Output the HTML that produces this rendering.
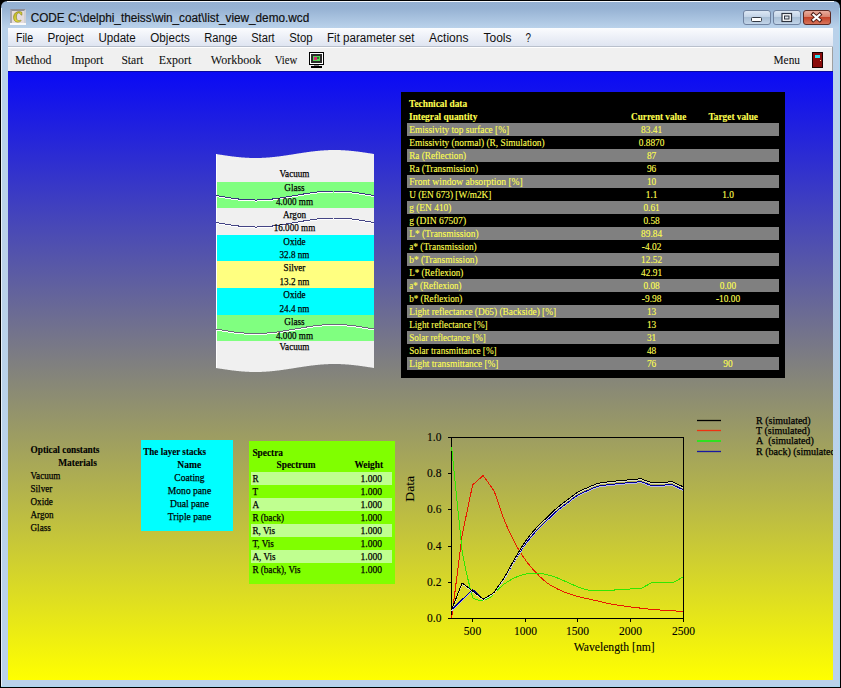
<!DOCTYPE html>
<html><head><meta charset="utf-8"><style>html,body{margin:0;padding:0;background:#000;overflow:hidden}svg{display:block}</style></head>
<body><svg width="841" height="688" viewBox="0 0 841 688" shape-rendering="auto">
<defs>
<linearGradient id="tb" gradientUnits="userSpaceOnUse" x1="0" y1="0" x2="0" y2="688"><stop offset="0" stop-color="#94b0d2"/><stop offset="0.012" stop-color="#96b2d3"/><stop offset="0.04" stop-color="#b9d1ea"/><stop offset="1" stop-color="#bad2ea"/></linearGradient>
<linearGradient id="mb" x1="0" y1="0" x2="0" y2="1"><stop offset="0" stop-color="#fbfcfe"/><stop offset="0.45" stop-color="#eef1f8"/><stop offset="1" stop-color="#dfe5f1"/></linearGradient>
<linearGradient id="cl" gradientUnits="userSpaceOnUse" x1="0" y1="47" x2="0" y2="680"><stop offset="0" stop-color="#0000ff"/><stop offset="1" stop-color="#ffff00"/></linearGradient>
<linearGradient id="btn" x1="0" y1="0" x2="0" y2="1"><stop offset="0" stop-color="#dfe9f5"/><stop offset="0.45" stop-color="#c3d4e7"/><stop offset="0.5" stop-color="#a9bfd6"/><stop offset="1" stop-color="#c4d6ea"/></linearGradient>
<linearGradient id="cbtn" x1="0" y1="0" x2="0" y2="1"><stop offset="0" stop-color="#eab0a2"/><stop offset="0.45" stop-color="#d9826c"/><stop offset="0.5" stop-color="#c4442a"/><stop offset="1" stop-color="#d8775d"/></linearGradient>
</defs>
<rect x="0" y="0" width="841" height="688" fill="#000" />
<path d="M1,8 Q1,1 8,1 L833,1 Q840,1 840,8 L840,687 L1,687 Z" fill="url(#tb)"/>
<rect x="1" y="8" width="1" height="679" fill="#e8f0f8" />
<rect x="7" y="1" width="827" height="1" fill="#f4f8fc" />
<rect x="1" y="686" width="839" height="1" fill="#a8d8f0" />
<rect x="839" y="8" width="1" height="679" fill="#a8d8f0" />
<rect x="8" y="28" width="825" height="18" fill="url(#mb)" />
<rect x="8" y="46" width="825" height="1" fill="#b9c0cc" />
<rect x="8" y="47" width="825" height="24" fill="#f0f0f0" />
<rect x="8" y="47" width="825" height="1" fill="#ffffff" />
<rect x="832" y="47" width="1" height="24" fill="#a0a0a0" />
<rect x="8" y="71" width="825" height="609" fill="url(#cl)" />
<rect x="8" y="71" width="825" height="1" fill="#0a0aa0" />
<text x="30.70" y="22.00" font-family="Liberation Sans" font-size="12" font-weight="400" fill="#101010" textLength="278.50" lengthAdjust="spacingAndGlyphs" stroke="#101010" stroke-width="0.2" >CODE C:\delphi_theiss\win_coat\list_view_demo.wcd</text>
<g>
<rect x="10" y="9" width="16" height="16" fill="#a8a8b0"/>
<path d="M10,9 L26,9 L23,12 L13,12 Z" fill="#8e8e98"/>
<path d="M10,25 L26,25 L23,22 L13,22 Z" fill="#fafafa"/>
<path d="M26,9 L26,25 L23,22 L23,12 Z" fill="#d0d0d6"/>
<rect x="12" y="11" width="12" height="12" fill="#e6dcdc"/>
<rect x="10" y="23" width="16" height="2" fill="#fafafa"/>
<defs><linearGradient id="cg" x1="0" y1="0" x2="1" y2="1"><stop offset="0" stop-color="#b8b020"/><stop offset="0.6" stop-color="#e0d838"/><stop offset="1" stop-color="#f4f070"/></linearGradient></defs>
<path d="M21.9,12.3 C20.4,11.3 17.4,11.3 15.4,12.9 C13.0,14.9 12.9,19.6 15.4,21.4 C17.2,22.6 19.6,22.3 21.2,20.7 L20.7,20.1 C19.3,21.0 17.7,20.8 17.0,19.6 C15.9,17.6 16.3,14.2 17.9,13.1 C18.8,12.6 20.0,13.0 20.7,14.6 L21.9,15.2 Z" fill="url(#cg)" stroke="#6e6810" stroke-width="0.5"/>
</g>
<rect x="743.5" y="10.5" width="27" height="14" rx="2.5" fill="url(#btn)" stroke="#6f82a0" stroke-width="1"/>
<rect x="773.5" y="10.5" width="27" height="14" rx="2.5" fill="url(#btn)" stroke="#6f82a0" stroke-width="1"/>
<rect x="803.5" y="10.5" width="27" height="14" rx="2.5" fill="url(#cbtn)" stroke="#5c2a24" stroke-width="1"/>
<rect x="751.5" y="17.5" width="10" height="4" rx="1" fill="#fff" stroke="#343a44" stroke-width="1"/>
<rect x="782" y="13.5" width="9.5" height="8" fill="#fff" stroke="#2e3440" stroke-width="1.2"/><rect x="784.5" y="16" width="4.5" height="3" fill="#dfe6ee" stroke="#2e3440" stroke-width="1"/>
<path d="M811.8,13.2 L821.2,21.4 M821.2,13.2 L811.8,21.4" stroke="#4a1a14" stroke-width="3.8" stroke-linecap="butt"/><path d="M812.6,14 L820.4,20.6 M820.4,14 L812.6,20.6" stroke="#ffffff" stroke-width="2.1" stroke-linecap="butt"/>
<text x="16.00" y="42.00" font-family="Liberation Sans" font-size="12" font-weight="400" fill="#101010" textLength="17.00" lengthAdjust="spacingAndGlyphs"  >File</text>
<text x="47.40" y="42.00" font-family="Liberation Sans" font-size="12" font-weight="400" fill="#101010" textLength="36.50" lengthAdjust="spacingAndGlyphs"  >Project</text>
<text x="98.40" y="42.00" font-family="Liberation Sans" font-size="12" font-weight="400" fill="#101010" textLength="37.40" lengthAdjust="spacingAndGlyphs"  >Update</text>
<text x="150.30" y="42.00" font-family="Liberation Sans" font-size="12" font-weight="400" fill="#101010" textLength="39.50" lengthAdjust="spacingAndGlyphs"  >Objects</text>
<text x="204.30" y="42.00" font-family="Liberation Sans" font-size="12" font-weight="400" fill="#101010" textLength="32.90" lengthAdjust="spacingAndGlyphs"  >Range</text>
<text x="251.20" y="42.00" font-family="Liberation Sans" font-size="12" font-weight="400" fill="#101010" textLength="23.50" lengthAdjust="spacingAndGlyphs"  >Start</text>
<text x="289.20" y="42.00" font-family="Liberation Sans" font-size="12" font-weight="400" fill="#101010" textLength="23.40" lengthAdjust="spacingAndGlyphs"  >Stop</text>
<text x="327.00" y="42.00" font-family="Liberation Sans" font-size="12" font-weight="400" fill="#101010" textLength="87.50" lengthAdjust="spacingAndGlyphs"  >Fit parameter set</text>
<text x="429.00" y="42.00" font-family="Liberation Sans" font-size="12" font-weight="400" fill="#101010" textLength="39.50" lengthAdjust="spacingAndGlyphs"  >Actions</text>
<text x="483.50" y="42.00" font-family="Liberation Sans" font-size="12" font-weight="400" fill="#101010" textLength="28.00" lengthAdjust="spacingAndGlyphs"  >Tools</text>
<text x="525.50" y="42.00" font-family="Liberation Sans" font-size="12" font-weight="400" fill="#101010" textLength="5.50" lengthAdjust="spacingAndGlyphs"  >?</text>
<text x="15.00" y="64.00" font-family="Liberation Serif" font-size="12" font-weight="400" fill="#101010" textLength="36.40" lengthAdjust="spacingAndGlyphs" stroke="#101010" stroke-width="0.08" >Method</text>
<text x="71.00" y="64.00" font-family="Liberation Serif" font-size="12" font-weight="400" fill="#101010" textLength="32.40" lengthAdjust="spacingAndGlyphs" stroke="#101010" stroke-width="0.08" >Import</text>
<text x="121.40" y="64.00" font-family="Liberation Serif" font-size="12" font-weight="400" fill="#101010" textLength="21.90" lengthAdjust="spacingAndGlyphs" stroke="#101010" stroke-width="0.08" >Start</text>
<text x="158.80" y="64.00" font-family="Liberation Serif" font-size="12" font-weight="400" fill="#101010" textLength="32.50" lengthAdjust="spacingAndGlyphs" stroke="#101010" stroke-width="0.08" >Export</text>
<text x="210.80" y="64.00" font-family="Liberation Serif" font-size="12" font-weight="400" fill="#101010" textLength="50.40" lengthAdjust="spacingAndGlyphs" stroke="#101010" stroke-width="0.08" >Workbook</text>
<text x="274.70" y="64.00" font-family="Liberation Serif" font-size="12" font-weight="400" fill="#101010" textLength="22.50" lengthAdjust="spacingAndGlyphs" stroke="#101010" stroke-width="0.08" >View</text>
<text x="773.50" y="64.00" font-family="Liberation Serif" font-size="12" font-weight="400" fill="#101010" textLength="26.50" lengthAdjust="spacingAndGlyphs" stroke="#101010" stroke-width="0.08" >Menu</text>
<g>
<rect x="309" y="52" width="15" height="13" fill="#000"/>
<rect x="310" y="53" width="13" height="11" fill="#fff"/>
<rect x="311" y="54" width="11" height="9" fill="#2a2a2a"/>
<rect x="313" y="56" width="7" height="5" fill="#58d058"/>
<rect x="314" y="57" width="3" height="3" fill="#d82878"/>
<rect x="317" y="57" width="2" height="2" fill="#208020"/>
<rect x="314" y="65" width="5" height="1" fill="#808080"/>
<rect x="311" y="66" width="11" height="2" fill="#000"/>
</g>
<g>
<rect x="812" y="52" width="11" height="16" fill="#1a0000"/>
<rect x="813" y="53" width="9" height="14" fill="#8a0a0a"/>
<rect x="815" y="55" width="5" height="3" fill="#30e0f0"/>
<rect x="820" y="60" width="1" height="1" fill="#ffd0a0"/>
</g>
<clipPath id="stk"><path d="M216.0,154.00 216.5,154.08 217.0,154.16 217.5,154.24 218.0,154.32 218.5,154.40 219.0,154.48 219.5,154.55 220.0,154.63 220.5,154.71 221.0,154.79 221.5,154.87 222.0,154.95 222.5,155.02 223.0,155.10 223.5,155.18 224.0,155.25 224.5,155.33 225.0,155.40 225.5,155.48 226.0,155.55 226.5,155.62 227.0,155.69 227.5,155.77 228.0,155.84 228.5,155.91 229.0,155.98 229.5,156.05 230.0,156.11 230.5,156.18 231.0,156.25 231.5,156.31 232.0,156.38 232.5,156.44 233.0,156.50 233.5,156.56 234.0,156.62 234.5,156.68 235.0,156.74 235.5,156.80 236.0,156.86 236.5,156.91 237.0,156.97 237.5,157.02 238.0,157.07 238.5,157.12 239.0,157.17 239.5,157.22 240.0,157.26 240.5,157.31 241.0,157.35 241.5,157.40 242.0,157.44 242.5,157.48 243.0,157.52 243.5,157.55 244.0,157.59 244.5,157.62 245.0,157.66 245.5,157.69 246.0,157.72 246.5,157.75 247.0,157.77 247.5,157.80 248.0,157.82 248.5,157.85 249.0,157.87 249.5,157.89 250.0,157.90 250.5,157.92 251.0,157.94 251.5,157.95 252.0,157.96 252.5,157.97 253.0,157.98 253.5,157.99 254.0,157.99 254.5,158.00 255.0,158.00 255.5,158.00 256.0,158.00 256.5,158.00 257.0,157.99 257.5,157.99 258.0,157.98 258.5,157.97 259.0,157.96 259.5,157.95 260.0,157.94 260.5,157.92 261.0,157.90 261.5,157.89 262.0,157.87 262.5,157.85 263.0,157.82 263.5,157.80 264.0,157.77 264.5,157.75 265.0,157.72 265.5,157.69 266.0,157.66 266.5,157.62 267.0,157.59 267.5,157.55 268.0,157.52 268.5,157.48 269.0,157.44 269.5,157.40 270.0,157.35 270.5,157.31 271.0,157.26 271.5,157.22 272.0,157.17 272.5,157.12 273.0,157.07 273.5,157.02 274.0,156.97 274.5,156.91 275.0,156.86 275.5,156.80 276.0,156.74 276.5,156.68 277.0,156.62 277.5,156.56 278.0,156.50 278.5,156.44 279.0,156.38 279.5,156.31 280.0,156.25 280.5,156.18 281.0,156.11 281.5,156.05 282.0,155.98 282.5,155.91 283.0,155.84 283.5,155.77 284.0,155.69 284.5,155.62 285.0,155.55 285.5,155.48 286.0,155.40 286.5,155.33 287.0,155.25 287.5,155.18 288.0,155.10 288.5,155.02 289.0,154.95 289.5,154.87 290.0,154.79 290.5,154.71 291.0,154.63 291.5,154.55 292.0,154.48 292.5,154.40 293.0,154.32 293.5,154.24 294.0,154.16 294.5,154.08 295.0,154.00 295.5,153.92 296.0,153.84 296.5,153.76 297.0,153.68 297.5,153.60 298.0,153.52 298.5,153.45 299.0,153.37 299.5,153.29 300.0,153.21 300.5,153.13 301.0,153.05 301.5,152.98 302.0,152.90 302.5,152.82 303.0,152.75 303.5,152.67 304.0,152.60 304.5,152.52 305.0,152.45 305.5,152.38 306.0,152.31 306.5,152.23 307.0,152.16 307.5,152.09 308.0,152.02 308.5,151.95 309.0,151.89 309.5,151.82 310.0,151.75 310.5,151.69 311.0,151.62 311.5,151.56 312.0,151.50 312.5,151.44 313.0,151.38 313.5,151.32 314.0,151.26 314.5,151.20 315.0,151.14 315.5,151.09 316.0,151.03 316.5,150.98 317.0,150.93 317.5,150.88 318.0,150.83 318.5,150.78 319.0,150.74 319.5,150.69 320.0,150.65 320.5,150.60 321.0,150.56 321.5,150.52 322.0,150.48 322.5,150.45 323.0,150.41 323.5,150.38 324.0,150.34 324.5,150.31 325.0,150.28 325.5,150.25 326.0,150.23 326.5,150.20 327.0,150.18 327.5,150.15 328.0,150.13 328.5,150.11 329.0,150.10 329.5,150.08 330.0,150.06 330.5,150.05 331.0,150.04 331.5,150.03 332.0,150.02 332.5,150.01 333.0,150.01 333.5,150.00 334.0,150.00 334.5,150.00 335.0,150.00 335.5,150.00 336.0,150.01 336.5,150.01 337.0,150.02 337.5,150.03 338.0,150.04 338.5,150.05 339.0,150.06 339.5,150.08 340.0,150.10 340.5,150.11 341.0,150.13 341.5,150.15 342.0,150.18 342.5,150.20 343.0,150.23 343.5,150.25 344.0,150.28 344.5,150.31 345.0,150.34 345.5,150.38 346.0,150.41 346.5,150.45 347.0,150.48 347.5,150.52 348.0,150.56 348.5,150.60 349.0,150.65 349.5,150.69 350.0,150.74 350.5,150.78 351.0,150.83 351.5,150.88 352.0,150.93 352.5,150.98 353.0,151.03 353.5,151.09 354.0,151.14 354.5,151.20 355.0,151.26 355.5,151.32 356.0,151.38 356.5,151.44 357.0,151.50 357.5,151.56 358.0,151.62 358.5,151.69 359.0,151.75 359.5,151.82 360.0,151.89 360.5,151.95 361.0,152.02 361.5,152.09 362.0,152.16 362.5,152.23 363.0,152.31 363.5,152.38 364.0,152.45 364.5,152.52 365.0,152.60 365.5,152.67 366.0,152.75 366.5,152.82 367.0,152.90 367.5,152.98 368.0,153.05 368.5,153.13 369.0,153.21 369.5,153.29 370.0,153.37 370.5,153.45 371.0,153.52 371.5,153.60 372.0,153.68 372.5,153.76 373.0,153.84 373.5,153.92 374.0,154.00 L374.0,368.00 373.5,367.92 373.0,367.84 372.5,367.76 372.0,367.68 371.5,367.60 371.0,367.52 370.5,367.45 370.0,367.37 369.5,367.29 369.0,367.21 368.5,367.13 368.0,367.05 367.5,366.98 367.0,366.90 366.5,366.82 366.0,366.75 365.5,366.67 365.0,366.60 364.5,366.52 364.0,366.45 363.5,366.38 363.0,366.31 362.5,366.23 362.0,366.16 361.5,366.09 361.0,366.02 360.5,365.95 360.0,365.89 359.5,365.82 359.0,365.75 358.5,365.69 358.0,365.62 357.5,365.56 357.0,365.50 356.5,365.44 356.0,365.38 355.5,365.32 355.0,365.26 354.5,365.20 354.0,365.14 353.5,365.09 353.0,365.03 352.5,364.98 352.0,364.93 351.5,364.88 351.0,364.83 350.5,364.78 350.0,364.74 349.5,364.69 349.0,364.65 348.5,364.60 348.0,364.56 347.5,364.52 347.0,364.48 346.5,364.45 346.0,364.41 345.5,364.38 345.0,364.34 344.5,364.31 344.0,364.28 343.5,364.25 343.0,364.23 342.5,364.20 342.0,364.18 341.5,364.15 341.0,364.13 340.5,364.11 340.0,364.10 339.5,364.08 339.0,364.06 338.5,364.05 338.0,364.04 337.5,364.03 337.0,364.02 336.5,364.01 336.0,364.01 335.5,364.00 335.0,364.00 334.5,364.00 334.0,364.00 333.5,364.00 333.0,364.01 332.5,364.01 332.0,364.02 331.5,364.03 331.0,364.04 330.5,364.05 330.0,364.06 329.5,364.08 329.0,364.10 328.5,364.11 328.0,364.13 327.5,364.15 327.0,364.18 326.5,364.20 326.0,364.23 325.5,364.25 325.0,364.28 324.5,364.31 324.0,364.34 323.5,364.38 323.0,364.41 322.5,364.45 322.0,364.48 321.5,364.52 321.0,364.56 320.5,364.60 320.0,364.65 319.5,364.69 319.0,364.74 318.5,364.78 318.0,364.83 317.5,364.88 317.0,364.93 316.5,364.98 316.0,365.03 315.5,365.09 315.0,365.14 314.5,365.20 314.0,365.26 313.5,365.32 313.0,365.38 312.5,365.44 312.0,365.50 311.5,365.56 311.0,365.62 310.5,365.69 310.0,365.75 309.5,365.82 309.0,365.89 308.5,365.95 308.0,366.02 307.5,366.09 307.0,366.16 306.5,366.23 306.0,366.31 305.5,366.38 305.0,366.45 304.5,366.52 304.0,366.60 303.5,366.67 303.0,366.75 302.5,366.82 302.0,366.90 301.5,366.98 301.0,367.05 300.5,367.13 300.0,367.21 299.5,367.29 299.0,367.37 298.5,367.45 298.0,367.52 297.5,367.60 297.0,367.68 296.5,367.76 296.0,367.84 295.5,367.92 295.0,368.00 294.5,368.08 294.0,368.16 293.5,368.24 293.0,368.32 292.5,368.40 292.0,368.48 291.5,368.55 291.0,368.63 290.5,368.71 290.0,368.79 289.5,368.87 289.0,368.95 288.5,369.02 288.0,369.10 287.5,369.18 287.0,369.25 286.5,369.33 286.0,369.40 285.5,369.48 285.0,369.55 284.5,369.62 284.0,369.69 283.5,369.77 283.0,369.84 282.5,369.91 282.0,369.98 281.5,370.05 281.0,370.11 280.5,370.18 280.0,370.25 279.5,370.31 279.0,370.38 278.5,370.44 278.0,370.50 277.5,370.56 277.0,370.62 276.5,370.68 276.0,370.74 275.5,370.80 275.0,370.86 274.5,370.91 274.0,370.97 273.5,371.02 273.0,371.07 272.5,371.12 272.0,371.17 271.5,371.22 271.0,371.26 270.5,371.31 270.0,371.35 269.5,371.40 269.0,371.44 268.5,371.48 268.0,371.52 267.5,371.55 267.0,371.59 266.5,371.62 266.0,371.66 265.5,371.69 265.0,371.72 264.5,371.75 264.0,371.77 263.5,371.80 263.0,371.82 262.5,371.85 262.0,371.87 261.5,371.89 261.0,371.90 260.5,371.92 260.0,371.94 259.5,371.95 259.0,371.96 258.5,371.97 258.0,371.98 257.5,371.99 257.0,371.99 256.5,372.00 256.0,372.00 255.5,372.00 255.0,372.00 254.5,372.00 254.0,371.99 253.5,371.99 253.0,371.98 252.5,371.97 252.0,371.96 251.5,371.95 251.0,371.94 250.5,371.92 250.0,371.90 249.5,371.89 249.0,371.87 248.5,371.85 248.0,371.82 247.5,371.80 247.0,371.77 246.5,371.75 246.0,371.72 245.5,371.69 245.0,371.66 244.5,371.62 244.0,371.59 243.5,371.55 243.0,371.52 242.5,371.48 242.0,371.44 241.5,371.40 241.0,371.35 240.5,371.31 240.0,371.26 239.5,371.22 239.0,371.17 238.5,371.12 238.0,371.07 237.5,371.02 237.0,370.97 236.5,370.91 236.0,370.86 235.5,370.80 235.0,370.74 234.5,370.68 234.0,370.62 233.5,370.56 233.0,370.50 232.5,370.44 232.0,370.38 231.5,370.31 231.0,370.25 230.5,370.18 230.0,370.11 229.5,370.05 229.0,369.98 228.5,369.91 228.0,369.84 227.5,369.77 227.0,369.69 226.5,369.62 226.0,369.55 225.5,369.48 225.0,369.40 224.5,369.33 224.0,369.25 223.5,369.18 223.0,369.10 222.5,369.02 222.0,368.95 221.5,368.87 221.0,368.79 220.5,368.71 220.0,368.63 219.5,368.55 219.0,368.48 218.5,368.40 218.0,368.32 217.5,368.24 217.0,368.16 216.5,368.08 216.0,368.00 Z"/></clipPath>
<g clip-path="url(#stk)">
<rect x="216" y="140" width="158" height="42" fill="#f0f0f0" />
<rect x="216" y="182" width="158" height="26" fill="#80ff80" />
<rect x="216" y="208" width="158" height="27" fill="#f0f0f0" />
<rect x="216" y="235" width="158" height="26" fill="#00ffff" />
<rect x="216" y="261" width="158" height="27" fill="#ffff80" />
<rect x="216" y="288" width="158" height="27" fill="#00ffff" />
<rect x="216" y="315" width="158" height="26" fill="#80ff80" />
<rect x="216" y="341" width="158" height="39" fill="#f0f0f0" />
<rect x="216" y="140" width="1" height="240" fill="#ffffff" />
<polyline points="216.0,196.50 216.5,196.59 217.0,196.68 217.5,196.77 218.0,196.86 218.5,196.95 219.0,197.04 219.5,197.12 220.0,197.21 220.5,197.30 221.0,197.39 221.5,197.48 222.0,197.56 222.5,197.65 223.0,197.74 223.5,197.82 224.0,197.91 224.5,197.99 225.0,198.08 225.5,198.16 226.0,198.24 226.5,198.32 227.0,198.41 227.5,198.49 228.0,198.57 228.5,198.65 229.0,198.72 229.5,198.80 230.0,198.88 230.5,198.95 231.0,199.03 231.5,199.10 232.0,199.17 232.5,199.25 233.0,199.32 233.5,199.38 234.0,199.45 234.5,199.52 235.0,199.59 235.5,199.65 236.0,199.71 236.5,199.78 237.0,199.84 237.5,199.90 238.0,199.95 238.5,200.01 239.0,200.07 239.5,200.12 240.0,200.17 240.5,200.22 241.0,200.27 241.5,200.32 242.0,200.37 242.5,200.41 243.0,200.46 243.5,200.50 244.0,200.54 244.5,200.58 245.0,200.61 245.5,200.65 246.0,200.68 246.5,200.71 247.0,200.75 247.5,200.77 248.0,200.80 248.5,200.83 249.0,200.85 249.5,200.87 250.0,200.89 250.5,200.91 251.0,200.93 251.5,200.94 252.0,200.96 252.5,200.97 253.0,200.98 253.5,200.99 254.0,200.99 254.5,201.00 255.0,201.00 255.5,201.00 256.0,201.00 256.5,201.00 257.0,200.99 257.5,200.99 258.0,200.98 258.5,200.97 259.0,200.96 259.5,200.94 260.0,200.93 260.5,200.91 261.0,200.89 261.5,200.87 262.0,200.85 262.5,200.83 263.0,200.80 263.5,200.77 264.0,200.75 264.5,200.71 265.0,200.68 265.5,200.65 266.0,200.61 266.5,200.58 267.0,200.54 267.5,200.50 268.0,200.46 268.5,200.41 269.0,200.37 269.5,200.32 270.0,200.27 270.5,200.22 271.0,200.17 271.5,200.12 272.0,200.07 272.5,200.01 273.0,199.95 273.5,199.90 274.0,199.84 274.5,199.78 275.0,199.71 275.5,199.65 276.0,199.59 276.5,199.52 277.0,199.45 277.5,199.38 278.0,199.32 278.5,199.25 279.0,199.17 279.5,199.10 280.0,199.03 280.5,198.95 281.0,198.88 281.5,198.80 282.0,198.72 282.5,198.65 283.0,198.57 283.5,198.49 284.0,198.41 284.5,198.32 285.0,198.24 285.5,198.16 286.0,198.08 286.5,197.99 287.0,197.91 287.5,197.82 288.0,197.74 288.5,197.65 289.0,197.56 289.5,197.48 290.0,197.39 290.5,197.30 291.0,197.21 291.5,197.12 292.0,197.04 292.5,196.95 293.0,196.86 293.5,196.77 294.0,196.68 294.5,196.59 295.0,196.50 295.5,196.41 296.0,196.32 296.5,196.23 297.0,196.14 297.5,196.05 298.0,195.96 298.5,195.88 299.0,195.79 299.5,195.70 300.0,195.61 300.5,195.52 301.0,195.44 301.5,195.35 302.0,195.26 302.5,195.18 303.0,195.09 303.5,195.01 304.0,194.92 304.5,194.84 305.0,194.76 305.5,194.68 306.0,194.59 306.5,194.51 307.0,194.43 307.5,194.35 308.0,194.28 308.5,194.20 309.0,194.12 309.5,194.05 310.0,193.97 310.5,193.90 311.0,193.83 311.5,193.75 312.0,193.68 312.5,193.62 313.0,193.55 313.5,193.48 314.0,193.41 314.5,193.35 315.0,193.29 315.5,193.22 316.0,193.16 316.5,193.10 317.0,193.05 317.5,192.99 318.0,192.93 318.5,192.88 319.0,192.83 319.5,192.78 320.0,192.73 320.5,192.68 321.0,192.63 321.5,192.59 322.0,192.54 322.5,192.50 323.0,192.46 323.5,192.42 324.0,192.39 324.5,192.35 325.0,192.32 325.5,192.29 326.0,192.25 326.5,192.23 327.0,192.20 327.5,192.17 328.0,192.15 328.5,192.13 329.0,192.11 329.5,192.09 330.0,192.07 330.5,192.06 331.0,192.04 331.5,192.03 332.0,192.02 332.5,192.01 333.0,192.01 333.5,192.00 334.0,192.00 334.5,192.00 335.0,192.00 335.5,192.00 336.0,192.01 336.5,192.01 337.0,192.02 337.5,192.03 338.0,192.04 338.5,192.06 339.0,192.07 339.5,192.09 340.0,192.11 340.5,192.13 341.0,192.15 341.5,192.17 342.0,192.20 342.5,192.23 343.0,192.25 343.5,192.29 344.0,192.32 344.5,192.35 345.0,192.39 345.5,192.42 346.0,192.46 346.5,192.50 347.0,192.54 347.5,192.59 348.0,192.63 348.5,192.68 349.0,192.73 349.5,192.78 350.0,192.83 350.5,192.88 351.0,192.93 351.5,192.99 352.0,193.05 352.5,193.10 353.0,193.16 353.5,193.22 354.0,193.29 354.5,193.35 355.0,193.41 355.5,193.48 356.0,193.55 356.5,193.62 357.0,193.68 357.5,193.75 358.0,193.83 358.5,193.90 359.0,193.97 359.5,194.05 360.0,194.12 360.5,194.20 361.0,194.28 361.5,194.35 362.0,194.43 362.5,194.51 363.0,194.59 363.5,194.68 364.0,194.76 364.5,194.84 365.0,194.92 365.5,195.01 366.0,195.09 366.5,195.18 367.0,195.26 367.5,195.35 368.0,195.44 368.5,195.52 369.0,195.61 369.5,195.70 370.0,195.79 370.5,195.88 371.0,195.96 371.5,196.05 372.0,196.14 372.5,196.23 373.0,196.32 373.5,196.41 374.0,196.50" fill="none" stroke="#ffffff" stroke-width="1" shape-rendering="crispEdges"/>
<polyline points="216.0,195.50 216.5,195.59 217.0,195.68 217.5,195.77 218.0,195.86 218.5,195.95 219.0,196.04 219.5,196.12 220.0,196.21 220.5,196.30 221.0,196.39 221.5,196.48 222.0,196.56 222.5,196.65 223.0,196.74 223.5,196.82 224.0,196.91 224.5,196.99 225.0,197.08 225.5,197.16 226.0,197.24 226.5,197.32 227.0,197.41 227.5,197.49 228.0,197.57 228.5,197.65 229.0,197.72 229.5,197.80 230.0,197.88 230.5,197.95 231.0,198.03 231.5,198.10 232.0,198.17 232.5,198.25 233.0,198.32 233.5,198.38 234.0,198.45 234.5,198.52 235.0,198.59 235.5,198.65 236.0,198.71 236.5,198.78 237.0,198.84 237.5,198.90 238.0,198.95 238.5,199.01 239.0,199.07 239.5,199.12 240.0,199.17 240.5,199.22 241.0,199.27 241.5,199.32 242.0,199.37 242.5,199.41 243.0,199.46 243.5,199.50 244.0,199.54 244.5,199.58 245.0,199.61 245.5,199.65 246.0,199.68 246.5,199.71 247.0,199.75 247.5,199.77 248.0,199.80 248.5,199.83 249.0,199.85 249.5,199.87 250.0,199.89 250.5,199.91 251.0,199.93 251.5,199.94 252.0,199.96 252.5,199.97 253.0,199.98 253.5,199.99 254.0,199.99 254.5,200.00 255.0,200.00 255.5,200.00 256.0,200.00 256.5,200.00 257.0,199.99 257.5,199.99 258.0,199.98 258.5,199.97 259.0,199.96 259.5,199.94 260.0,199.93 260.5,199.91 261.0,199.89 261.5,199.87 262.0,199.85 262.5,199.83 263.0,199.80 263.5,199.77 264.0,199.75 264.5,199.71 265.0,199.68 265.5,199.65 266.0,199.61 266.5,199.58 267.0,199.54 267.5,199.50 268.0,199.46 268.5,199.41 269.0,199.37 269.5,199.32 270.0,199.27 270.5,199.22 271.0,199.17 271.5,199.12 272.0,199.07 272.5,199.01 273.0,198.95 273.5,198.90 274.0,198.84 274.5,198.78 275.0,198.71 275.5,198.65 276.0,198.59 276.5,198.52 277.0,198.45 277.5,198.38 278.0,198.32 278.5,198.25 279.0,198.17 279.5,198.10 280.0,198.03 280.5,197.95 281.0,197.88 281.5,197.80 282.0,197.72 282.5,197.65 283.0,197.57 283.5,197.49 284.0,197.41 284.5,197.32 285.0,197.24 285.5,197.16 286.0,197.08 286.5,196.99 287.0,196.91 287.5,196.82 288.0,196.74 288.5,196.65 289.0,196.56 289.5,196.48 290.0,196.39 290.5,196.30 291.0,196.21 291.5,196.12 292.0,196.04 292.5,195.95 293.0,195.86 293.5,195.77 294.0,195.68 294.5,195.59 295.0,195.50 295.5,195.41 296.0,195.32 296.5,195.23 297.0,195.14 297.5,195.05 298.0,194.96 298.5,194.88 299.0,194.79 299.5,194.70 300.0,194.61 300.5,194.52 301.0,194.44 301.5,194.35 302.0,194.26 302.5,194.18 303.0,194.09 303.5,194.01 304.0,193.92 304.5,193.84 305.0,193.76 305.5,193.68 306.0,193.59 306.5,193.51 307.0,193.43 307.5,193.35 308.0,193.28 308.5,193.20 309.0,193.12 309.5,193.05 310.0,192.97 310.5,192.90 311.0,192.83 311.5,192.75 312.0,192.68 312.5,192.62 313.0,192.55 313.5,192.48 314.0,192.41 314.5,192.35 315.0,192.29 315.5,192.22 316.0,192.16 316.5,192.10 317.0,192.05 317.5,191.99 318.0,191.93 318.5,191.88 319.0,191.83 319.5,191.78 320.0,191.73 320.5,191.68 321.0,191.63 321.5,191.59 322.0,191.54 322.5,191.50 323.0,191.46 323.5,191.42 324.0,191.39 324.5,191.35 325.0,191.32 325.5,191.29 326.0,191.25 326.5,191.23 327.0,191.20 327.5,191.17 328.0,191.15 328.5,191.13 329.0,191.11 329.5,191.09 330.0,191.07 330.5,191.06 331.0,191.04 331.5,191.03 332.0,191.02 332.5,191.01 333.0,191.01 333.5,191.00 334.0,191.00 334.5,191.00 335.0,191.00 335.5,191.00 336.0,191.01 336.5,191.01 337.0,191.02 337.5,191.03 338.0,191.04 338.5,191.06 339.0,191.07 339.5,191.09 340.0,191.11 340.5,191.13 341.0,191.15 341.5,191.17 342.0,191.20 342.5,191.23 343.0,191.25 343.5,191.29 344.0,191.32 344.5,191.35 345.0,191.39 345.5,191.42 346.0,191.46 346.5,191.50 347.0,191.54 347.5,191.59 348.0,191.63 348.5,191.68 349.0,191.73 349.5,191.78 350.0,191.83 350.5,191.88 351.0,191.93 351.5,191.99 352.0,192.05 352.5,192.10 353.0,192.16 353.5,192.22 354.0,192.29 354.5,192.35 355.0,192.41 355.5,192.48 356.0,192.55 356.5,192.62 357.0,192.68 357.5,192.75 358.0,192.83 358.5,192.90 359.0,192.97 359.5,193.05 360.0,193.12 360.5,193.20 361.0,193.28 361.5,193.35 362.0,193.43 362.5,193.51 363.0,193.59 363.5,193.68 364.0,193.76 364.5,193.84 365.0,193.92 365.5,194.01 366.0,194.09 366.5,194.18 367.0,194.26 367.5,194.35 368.0,194.44 368.5,194.52 369.0,194.61 369.5,194.70 370.0,194.79 370.5,194.88 371.0,194.96 371.5,195.05 372.0,195.14 372.5,195.23 373.0,195.32 373.5,195.41 374.0,195.50" fill="none" stroke="#38387e" stroke-width="1" shape-rendering="crispEdges"/>
<polyline points="216.0,223.50 216.5,223.59 217.0,223.68 217.5,223.77 218.0,223.86 218.5,223.95 219.0,224.04 219.5,224.12 220.0,224.21 220.5,224.30 221.0,224.39 221.5,224.48 222.0,224.56 222.5,224.65 223.0,224.74 223.5,224.82 224.0,224.91 224.5,224.99 225.0,225.08 225.5,225.16 226.0,225.24 226.5,225.32 227.0,225.41 227.5,225.49 228.0,225.57 228.5,225.65 229.0,225.72 229.5,225.80 230.0,225.88 230.5,225.95 231.0,226.03 231.5,226.10 232.0,226.17 232.5,226.25 233.0,226.32 233.5,226.38 234.0,226.45 234.5,226.52 235.0,226.59 235.5,226.65 236.0,226.71 236.5,226.78 237.0,226.84 237.5,226.90 238.0,226.95 238.5,227.01 239.0,227.07 239.5,227.12 240.0,227.17 240.5,227.22 241.0,227.27 241.5,227.32 242.0,227.37 242.5,227.41 243.0,227.46 243.5,227.50 244.0,227.54 244.5,227.58 245.0,227.61 245.5,227.65 246.0,227.68 246.5,227.71 247.0,227.75 247.5,227.77 248.0,227.80 248.5,227.83 249.0,227.85 249.5,227.87 250.0,227.89 250.5,227.91 251.0,227.93 251.5,227.94 252.0,227.96 252.5,227.97 253.0,227.98 253.5,227.99 254.0,227.99 254.5,228.00 255.0,228.00 255.5,228.00 256.0,228.00 256.5,228.00 257.0,227.99 257.5,227.99 258.0,227.98 258.5,227.97 259.0,227.96 259.5,227.94 260.0,227.93 260.5,227.91 261.0,227.89 261.5,227.87 262.0,227.85 262.5,227.83 263.0,227.80 263.5,227.77 264.0,227.75 264.5,227.71 265.0,227.68 265.5,227.65 266.0,227.61 266.5,227.58 267.0,227.54 267.5,227.50 268.0,227.46 268.5,227.41 269.0,227.37 269.5,227.32 270.0,227.27 270.5,227.22 271.0,227.17 271.5,227.12 272.0,227.07 272.5,227.01 273.0,226.95 273.5,226.90 274.0,226.84 274.5,226.78 275.0,226.71 275.5,226.65 276.0,226.59 276.5,226.52 277.0,226.45 277.5,226.38 278.0,226.32 278.5,226.25 279.0,226.17 279.5,226.10 280.0,226.03 280.5,225.95 281.0,225.88 281.5,225.80 282.0,225.72 282.5,225.65 283.0,225.57 283.5,225.49 284.0,225.41 284.5,225.32 285.0,225.24 285.5,225.16 286.0,225.08 286.5,224.99 287.0,224.91 287.5,224.82 288.0,224.74 288.5,224.65 289.0,224.56 289.5,224.48 290.0,224.39 290.5,224.30 291.0,224.21 291.5,224.12 292.0,224.04 292.5,223.95 293.0,223.86 293.5,223.77 294.0,223.68 294.5,223.59 295.0,223.50 295.5,223.41 296.0,223.32 296.5,223.23 297.0,223.14 297.5,223.05 298.0,222.96 298.5,222.88 299.0,222.79 299.5,222.70 300.0,222.61 300.5,222.52 301.0,222.44 301.5,222.35 302.0,222.26 302.5,222.18 303.0,222.09 303.5,222.01 304.0,221.92 304.5,221.84 305.0,221.76 305.5,221.68 306.0,221.59 306.5,221.51 307.0,221.43 307.5,221.35 308.0,221.28 308.5,221.20 309.0,221.12 309.5,221.05 310.0,220.97 310.5,220.90 311.0,220.83 311.5,220.75 312.0,220.68 312.5,220.62 313.0,220.55 313.5,220.48 314.0,220.41 314.5,220.35 315.0,220.29 315.5,220.22 316.0,220.16 316.5,220.10 317.0,220.05 317.5,219.99 318.0,219.93 318.5,219.88 319.0,219.83 319.5,219.78 320.0,219.73 320.5,219.68 321.0,219.63 321.5,219.59 322.0,219.54 322.5,219.50 323.0,219.46 323.5,219.42 324.0,219.39 324.5,219.35 325.0,219.32 325.5,219.29 326.0,219.25 326.5,219.23 327.0,219.20 327.5,219.17 328.0,219.15 328.5,219.13 329.0,219.11 329.5,219.09 330.0,219.07 330.5,219.06 331.0,219.04 331.5,219.03 332.0,219.02 332.5,219.01 333.0,219.01 333.5,219.00 334.0,219.00 334.5,219.00 335.0,219.00 335.5,219.00 336.0,219.01 336.5,219.01 337.0,219.02 337.5,219.03 338.0,219.04 338.5,219.06 339.0,219.07 339.5,219.09 340.0,219.11 340.5,219.13 341.0,219.15 341.5,219.17 342.0,219.20 342.5,219.23 343.0,219.25 343.5,219.29 344.0,219.32 344.5,219.35 345.0,219.39 345.5,219.42 346.0,219.46 346.5,219.50 347.0,219.54 347.5,219.59 348.0,219.63 348.5,219.68 349.0,219.73 349.5,219.78 350.0,219.83 350.5,219.88 351.0,219.93 351.5,219.99 352.0,220.05 352.5,220.10 353.0,220.16 353.5,220.22 354.0,220.29 354.5,220.35 355.0,220.41 355.5,220.48 356.0,220.55 356.5,220.62 357.0,220.68 357.5,220.75 358.0,220.83 358.5,220.90 359.0,220.97 359.5,221.05 360.0,221.12 360.5,221.20 361.0,221.28 361.5,221.35 362.0,221.43 362.5,221.51 363.0,221.59 363.5,221.68 364.0,221.76 364.5,221.84 365.0,221.92 365.5,222.01 366.0,222.09 366.5,222.18 367.0,222.26 367.5,222.35 368.0,222.44 368.5,222.52 369.0,222.61 369.5,222.70 370.0,222.79 370.5,222.88 371.0,222.96 371.5,223.05 372.0,223.14 372.5,223.23 373.0,223.32 373.5,223.41 374.0,223.50" fill="none" stroke="#ffffff" stroke-width="1" shape-rendering="crispEdges"/>
<polyline points="216.0,222.50 216.5,222.59 217.0,222.68 217.5,222.77 218.0,222.86 218.5,222.95 219.0,223.04 219.5,223.12 220.0,223.21 220.5,223.30 221.0,223.39 221.5,223.48 222.0,223.56 222.5,223.65 223.0,223.74 223.5,223.82 224.0,223.91 224.5,223.99 225.0,224.08 225.5,224.16 226.0,224.24 226.5,224.32 227.0,224.41 227.5,224.49 228.0,224.57 228.5,224.65 229.0,224.72 229.5,224.80 230.0,224.88 230.5,224.95 231.0,225.03 231.5,225.10 232.0,225.17 232.5,225.25 233.0,225.32 233.5,225.38 234.0,225.45 234.5,225.52 235.0,225.59 235.5,225.65 236.0,225.71 236.5,225.78 237.0,225.84 237.5,225.90 238.0,225.95 238.5,226.01 239.0,226.07 239.5,226.12 240.0,226.17 240.5,226.22 241.0,226.27 241.5,226.32 242.0,226.37 242.5,226.41 243.0,226.46 243.5,226.50 244.0,226.54 244.5,226.58 245.0,226.61 245.5,226.65 246.0,226.68 246.5,226.71 247.0,226.75 247.5,226.77 248.0,226.80 248.5,226.83 249.0,226.85 249.5,226.87 250.0,226.89 250.5,226.91 251.0,226.93 251.5,226.94 252.0,226.96 252.5,226.97 253.0,226.98 253.5,226.99 254.0,226.99 254.5,227.00 255.0,227.00 255.5,227.00 256.0,227.00 256.5,227.00 257.0,226.99 257.5,226.99 258.0,226.98 258.5,226.97 259.0,226.96 259.5,226.94 260.0,226.93 260.5,226.91 261.0,226.89 261.5,226.87 262.0,226.85 262.5,226.83 263.0,226.80 263.5,226.77 264.0,226.75 264.5,226.71 265.0,226.68 265.5,226.65 266.0,226.61 266.5,226.58 267.0,226.54 267.5,226.50 268.0,226.46 268.5,226.41 269.0,226.37 269.5,226.32 270.0,226.27 270.5,226.22 271.0,226.17 271.5,226.12 272.0,226.07 272.5,226.01 273.0,225.95 273.5,225.90 274.0,225.84 274.5,225.78 275.0,225.71 275.5,225.65 276.0,225.59 276.5,225.52 277.0,225.45 277.5,225.38 278.0,225.32 278.5,225.25 279.0,225.17 279.5,225.10 280.0,225.03 280.5,224.95 281.0,224.88 281.5,224.80 282.0,224.72 282.5,224.65 283.0,224.57 283.5,224.49 284.0,224.41 284.5,224.32 285.0,224.24 285.5,224.16 286.0,224.08 286.5,223.99 287.0,223.91 287.5,223.82 288.0,223.74 288.5,223.65 289.0,223.56 289.5,223.48 290.0,223.39 290.5,223.30 291.0,223.21 291.5,223.12 292.0,223.04 292.5,222.95 293.0,222.86 293.5,222.77 294.0,222.68 294.5,222.59 295.0,222.50 295.5,222.41 296.0,222.32 296.5,222.23 297.0,222.14 297.5,222.05 298.0,221.96 298.5,221.88 299.0,221.79 299.5,221.70 300.0,221.61 300.5,221.52 301.0,221.44 301.5,221.35 302.0,221.26 302.5,221.18 303.0,221.09 303.5,221.01 304.0,220.92 304.5,220.84 305.0,220.76 305.5,220.68 306.0,220.59 306.5,220.51 307.0,220.43 307.5,220.35 308.0,220.28 308.5,220.20 309.0,220.12 309.5,220.05 310.0,219.97 310.5,219.90 311.0,219.83 311.5,219.75 312.0,219.68 312.5,219.62 313.0,219.55 313.5,219.48 314.0,219.41 314.5,219.35 315.0,219.29 315.5,219.22 316.0,219.16 316.5,219.10 317.0,219.05 317.5,218.99 318.0,218.93 318.5,218.88 319.0,218.83 319.5,218.78 320.0,218.73 320.5,218.68 321.0,218.63 321.5,218.59 322.0,218.54 322.5,218.50 323.0,218.46 323.5,218.42 324.0,218.39 324.5,218.35 325.0,218.32 325.5,218.29 326.0,218.25 326.5,218.23 327.0,218.20 327.5,218.17 328.0,218.15 328.5,218.13 329.0,218.11 329.5,218.09 330.0,218.07 330.5,218.06 331.0,218.04 331.5,218.03 332.0,218.02 332.5,218.01 333.0,218.01 333.5,218.00 334.0,218.00 334.5,218.00 335.0,218.00 335.5,218.00 336.0,218.01 336.5,218.01 337.0,218.02 337.5,218.03 338.0,218.04 338.5,218.06 339.0,218.07 339.5,218.09 340.0,218.11 340.5,218.13 341.0,218.15 341.5,218.17 342.0,218.20 342.5,218.23 343.0,218.25 343.5,218.29 344.0,218.32 344.5,218.35 345.0,218.39 345.5,218.42 346.0,218.46 346.5,218.50 347.0,218.54 347.5,218.59 348.0,218.63 348.5,218.68 349.0,218.73 349.5,218.78 350.0,218.83 350.5,218.88 351.0,218.93 351.5,218.99 352.0,219.05 352.5,219.10 353.0,219.16 353.5,219.22 354.0,219.29 354.5,219.35 355.0,219.41 355.5,219.48 356.0,219.55 356.5,219.62 357.0,219.68 357.5,219.75 358.0,219.83 358.5,219.90 359.0,219.97 359.5,220.05 360.0,220.12 360.5,220.20 361.0,220.28 361.5,220.35 362.0,220.43 362.5,220.51 363.0,220.59 363.5,220.68 364.0,220.76 364.5,220.84 365.0,220.92 365.5,221.01 366.0,221.09 366.5,221.18 367.0,221.26 367.5,221.35 368.0,221.44 368.5,221.52 369.0,221.61 369.5,221.70 370.0,221.79 370.5,221.88 371.0,221.96 371.5,222.05 372.0,222.14 372.5,222.23 373.0,222.32 373.5,222.41 374.0,222.50" fill="none" stroke="#444484" stroke-width="1" shape-rendering="crispEdges"/>
<polyline points="216.0,330.00 216.5,330.09 217.0,330.18 217.5,330.27 218.0,330.36 218.5,330.45 219.0,330.54 219.5,330.62 220.0,330.71 220.5,330.80 221.0,330.89 221.5,330.98 222.0,331.06 222.5,331.15 223.0,331.24 223.5,331.32 224.0,331.41 224.5,331.49 225.0,331.58 225.5,331.66 226.0,331.74 226.5,331.82 227.0,331.91 227.5,331.99 228.0,332.07 228.5,332.15 229.0,332.22 229.5,332.30 230.0,332.38 230.5,332.45 231.0,332.53 231.5,332.60 232.0,332.67 232.5,332.75 233.0,332.82 233.5,332.88 234.0,332.95 234.5,333.02 235.0,333.09 235.5,333.15 236.0,333.21 236.5,333.28 237.0,333.34 237.5,333.40 238.0,333.45 238.5,333.51 239.0,333.57 239.5,333.62 240.0,333.67 240.5,333.72 241.0,333.77 241.5,333.82 242.0,333.87 242.5,333.91 243.0,333.96 243.5,334.00 244.0,334.04 244.5,334.08 245.0,334.11 245.5,334.15 246.0,334.18 246.5,334.21 247.0,334.25 247.5,334.27 248.0,334.30 248.5,334.33 249.0,334.35 249.5,334.37 250.0,334.39 250.5,334.41 251.0,334.43 251.5,334.44 252.0,334.46 252.5,334.47 253.0,334.48 253.5,334.49 254.0,334.49 254.5,334.50 255.0,334.50 255.5,334.50 256.0,334.50 256.5,334.50 257.0,334.49 257.5,334.49 258.0,334.48 258.5,334.47 259.0,334.46 259.5,334.44 260.0,334.43 260.5,334.41 261.0,334.39 261.5,334.37 262.0,334.35 262.5,334.33 263.0,334.30 263.5,334.27 264.0,334.25 264.5,334.21 265.0,334.18 265.5,334.15 266.0,334.11 266.5,334.08 267.0,334.04 267.5,334.00 268.0,333.96 268.5,333.91 269.0,333.87 269.5,333.82 270.0,333.77 270.5,333.72 271.0,333.67 271.5,333.62 272.0,333.57 272.5,333.51 273.0,333.45 273.5,333.40 274.0,333.34 274.5,333.28 275.0,333.21 275.5,333.15 276.0,333.09 276.5,333.02 277.0,332.95 277.5,332.88 278.0,332.82 278.5,332.75 279.0,332.67 279.5,332.60 280.0,332.53 280.5,332.45 281.0,332.38 281.5,332.30 282.0,332.22 282.5,332.15 283.0,332.07 283.5,331.99 284.0,331.91 284.5,331.82 285.0,331.74 285.5,331.66 286.0,331.58 286.5,331.49 287.0,331.41 287.5,331.32 288.0,331.24 288.5,331.15 289.0,331.06 289.5,330.98 290.0,330.89 290.5,330.80 291.0,330.71 291.5,330.62 292.0,330.54 292.5,330.45 293.0,330.36 293.5,330.27 294.0,330.18 294.5,330.09 295.0,330.00 295.5,329.91 296.0,329.82 296.5,329.73 297.0,329.64 297.5,329.55 298.0,329.46 298.5,329.38 299.0,329.29 299.5,329.20 300.0,329.11 300.5,329.02 301.0,328.94 301.5,328.85 302.0,328.76 302.5,328.68 303.0,328.59 303.5,328.51 304.0,328.42 304.5,328.34 305.0,328.26 305.5,328.18 306.0,328.09 306.5,328.01 307.0,327.93 307.5,327.85 308.0,327.78 308.5,327.70 309.0,327.62 309.5,327.55 310.0,327.47 310.5,327.40 311.0,327.33 311.5,327.25 312.0,327.18 312.5,327.12 313.0,327.05 313.5,326.98 314.0,326.91 314.5,326.85 315.0,326.79 315.5,326.72 316.0,326.66 316.5,326.60 317.0,326.55 317.5,326.49 318.0,326.43 318.5,326.38 319.0,326.33 319.5,326.28 320.0,326.23 320.5,326.18 321.0,326.13 321.5,326.09 322.0,326.04 322.5,326.00 323.0,325.96 323.5,325.92 324.0,325.89 324.5,325.85 325.0,325.82 325.5,325.79 326.0,325.75 326.5,325.73 327.0,325.70 327.5,325.67 328.0,325.65 328.5,325.63 329.0,325.61 329.5,325.59 330.0,325.57 330.5,325.56 331.0,325.54 331.5,325.53 332.0,325.52 332.5,325.51 333.0,325.51 333.5,325.50 334.0,325.50 334.5,325.50 335.0,325.50 335.5,325.50 336.0,325.51 336.5,325.51 337.0,325.52 337.5,325.53 338.0,325.54 338.5,325.56 339.0,325.57 339.5,325.59 340.0,325.61 340.5,325.63 341.0,325.65 341.5,325.67 342.0,325.70 342.5,325.73 343.0,325.75 343.5,325.79 344.0,325.82 344.5,325.85 345.0,325.89 345.5,325.92 346.0,325.96 346.5,326.00 347.0,326.04 347.5,326.09 348.0,326.13 348.5,326.18 349.0,326.23 349.5,326.28 350.0,326.33 350.5,326.38 351.0,326.43 351.5,326.49 352.0,326.55 352.5,326.60 353.0,326.66 353.5,326.72 354.0,326.79 354.5,326.85 355.0,326.91 355.5,326.98 356.0,327.05 356.5,327.12 357.0,327.18 357.5,327.25 358.0,327.33 358.5,327.40 359.0,327.47 359.5,327.55 360.0,327.62 360.5,327.70 361.0,327.78 361.5,327.85 362.0,327.93 362.5,328.01 363.0,328.09 363.5,328.18 364.0,328.26 364.5,328.34 365.0,328.42 365.5,328.51 366.0,328.59 366.5,328.68 367.0,328.76 367.5,328.85 368.0,328.94 368.5,329.02 369.0,329.11 369.5,329.20 370.0,329.29 370.5,329.38 371.0,329.46 371.5,329.55 372.0,329.64 372.5,329.73 373.0,329.82 373.5,329.91 374.0,330.00" fill="none" stroke="#ffffff" stroke-width="1" shape-rendering="crispEdges"/>
<polyline points="216.0,329.00 216.5,329.09 217.0,329.18 217.5,329.27 218.0,329.36 218.5,329.45 219.0,329.54 219.5,329.62 220.0,329.71 220.5,329.80 221.0,329.89 221.5,329.98 222.0,330.06 222.5,330.15 223.0,330.24 223.5,330.32 224.0,330.41 224.5,330.49 225.0,330.58 225.5,330.66 226.0,330.74 226.5,330.82 227.0,330.91 227.5,330.99 228.0,331.07 228.5,331.15 229.0,331.22 229.5,331.30 230.0,331.38 230.5,331.45 231.0,331.53 231.5,331.60 232.0,331.67 232.5,331.75 233.0,331.82 233.5,331.88 234.0,331.95 234.5,332.02 235.0,332.09 235.5,332.15 236.0,332.21 236.5,332.28 237.0,332.34 237.5,332.40 238.0,332.45 238.5,332.51 239.0,332.57 239.5,332.62 240.0,332.67 240.5,332.72 241.0,332.77 241.5,332.82 242.0,332.87 242.5,332.91 243.0,332.96 243.5,333.00 244.0,333.04 244.5,333.08 245.0,333.11 245.5,333.15 246.0,333.18 246.5,333.21 247.0,333.25 247.5,333.27 248.0,333.30 248.5,333.33 249.0,333.35 249.5,333.37 250.0,333.39 250.5,333.41 251.0,333.43 251.5,333.44 252.0,333.46 252.5,333.47 253.0,333.48 253.5,333.49 254.0,333.49 254.5,333.50 255.0,333.50 255.5,333.50 256.0,333.50 256.5,333.50 257.0,333.49 257.5,333.49 258.0,333.48 258.5,333.47 259.0,333.46 259.5,333.44 260.0,333.43 260.5,333.41 261.0,333.39 261.5,333.37 262.0,333.35 262.5,333.33 263.0,333.30 263.5,333.27 264.0,333.25 264.5,333.21 265.0,333.18 265.5,333.15 266.0,333.11 266.5,333.08 267.0,333.04 267.5,333.00 268.0,332.96 268.5,332.91 269.0,332.87 269.5,332.82 270.0,332.77 270.5,332.72 271.0,332.67 271.5,332.62 272.0,332.57 272.5,332.51 273.0,332.45 273.5,332.40 274.0,332.34 274.5,332.28 275.0,332.21 275.5,332.15 276.0,332.09 276.5,332.02 277.0,331.95 277.5,331.88 278.0,331.82 278.5,331.75 279.0,331.67 279.5,331.60 280.0,331.53 280.5,331.45 281.0,331.38 281.5,331.30 282.0,331.22 282.5,331.15 283.0,331.07 283.5,330.99 284.0,330.91 284.5,330.82 285.0,330.74 285.5,330.66 286.0,330.58 286.5,330.49 287.0,330.41 287.5,330.32 288.0,330.24 288.5,330.15 289.0,330.06 289.5,329.98 290.0,329.89 290.5,329.80 291.0,329.71 291.5,329.62 292.0,329.54 292.5,329.45 293.0,329.36 293.5,329.27 294.0,329.18 294.5,329.09 295.0,329.00 295.5,328.91 296.0,328.82 296.5,328.73 297.0,328.64 297.5,328.55 298.0,328.46 298.5,328.38 299.0,328.29 299.5,328.20 300.0,328.11 300.5,328.02 301.0,327.94 301.5,327.85 302.0,327.76 302.5,327.68 303.0,327.59 303.5,327.51 304.0,327.42 304.5,327.34 305.0,327.26 305.5,327.18 306.0,327.09 306.5,327.01 307.0,326.93 307.5,326.85 308.0,326.78 308.5,326.70 309.0,326.62 309.5,326.55 310.0,326.47 310.5,326.40 311.0,326.33 311.5,326.25 312.0,326.18 312.5,326.12 313.0,326.05 313.5,325.98 314.0,325.91 314.5,325.85 315.0,325.79 315.5,325.72 316.0,325.66 316.5,325.60 317.0,325.55 317.5,325.49 318.0,325.43 318.5,325.38 319.0,325.33 319.5,325.28 320.0,325.23 320.5,325.18 321.0,325.13 321.5,325.09 322.0,325.04 322.5,325.00 323.0,324.96 323.5,324.92 324.0,324.89 324.5,324.85 325.0,324.82 325.5,324.79 326.0,324.75 326.5,324.73 327.0,324.70 327.5,324.67 328.0,324.65 328.5,324.63 329.0,324.61 329.5,324.59 330.0,324.57 330.5,324.56 331.0,324.54 331.5,324.53 332.0,324.52 332.5,324.51 333.0,324.51 333.5,324.50 334.0,324.50 334.5,324.50 335.0,324.50 335.5,324.50 336.0,324.51 336.5,324.51 337.0,324.52 337.5,324.53 338.0,324.54 338.5,324.56 339.0,324.57 339.5,324.59 340.0,324.61 340.5,324.63 341.0,324.65 341.5,324.67 342.0,324.70 342.5,324.73 343.0,324.75 343.5,324.79 344.0,324.82 344.5,324.85 345.0,324.89 345.5,324.92 346.0,324.96 346.5,325.00 347.0,325.04 347.5,325.09 348.0,325.13 348.5,325.18 349.0,325.23 349.5,325.28 350.0,325.33 350.5,325.38 351.0,325.43 351.5,325.49 352.0,325.55 352.5,325.60 353.0,325.66 353.5,325.72 354.0,325.79 354.5,325.85 355.0,325.91 355.5,325.98 356.0,326.05 356.5,326.12 357.0,326.18 357.5,326.25 358.0,326.33 358.5,326.40 359.0,326.47 359.5,326.55 360.0,326.62 360.5,326.70 361.0,326.78 361.5,326.85 362.0,326.93 362.5,327.01 363.0,327.09 363.5,327.18 364.0,327.26 364.5,327.34 365.0,327.42 365.5,327.51 366.0,327.59 366.5,327.68 367.0,327.76 367.5,327.85 368.0,327.94 368.5,328.02 369.0,328.11 369.5,328.20 370.0,328.29 370.5,328.38 371.0,328.46 371.5,328.55 372.0,328.64 372.5,328.73 373.0,328.82 373.5,328.91 374.0,329.00" fill="none" stroke="#6a6a7a" stroke-width="1" shape-rendering="crispEdges"/>
</g>
<text x="279.54" y="176.70" font-family="Liberation Serif" font-size="11" font-weight="400" fill="#000" textLength="29.92" lengthAdjust="spacingAndGlyphs" stroke="#000" stroke-width="0.25" >Vacuum</text>
<text x="284.36" y="191.00" font-family="Liberation Serif" font-size="11" font-weight="400" fill="#000" textLength="20.29" lengthAdjust="spacingAndGlyphs" stroke="#000" stroke-width="0.25" >Glass</text>
<text x="275.99" y="204.50" font-family="Liberation Serif" font-size="11" font-weight="400" fill="#000" textLength="37.03" lengthAdjust="spacingAndGlyphs" stroke="#000" stroke-width="0.25" >4.000 mm</text>
<text x="282.92" y="217.80" font-family="Liberation Serif" font-size="11" font-weight="400" fill="#000" textLength="23.16" lengthAdjust="spacingAndGlyphs" stroke="#000" stroke-width="0.25" >Argon</text>
<text x="273.70" y="231.00" font-family="Liberation Serif" font-size="11" font-weight="400" fill="#000" textLength="41.59" lengthAdjust="spacingAndGlyphs" stroke="#000" stroke-width="0.25" >16.000 mm</text>
<text x="283.34" y="245.00" font-family="Liberation Serif" font-size="11" font-weight="400" fill="#000" textLength="22.31" lengthAdjust="spacingAndGlyphs" stroke="#000" stroke-width="0.25" >Oxide</text>
<text x="279.54" y="258.40" font-family="Liberation Serif" font-size="11" font-weight="400" fill="#000" textLength="29.93" lengthAdjust="spacingAndGlyphs" stroke="#000" stroke-width="0.25" >32.8 nm</text>
<text x="283.60" y="271.00" font-family="Liberation Serif" font-size="11" font-weight="400" fill="#000" textLength="21.81" lengthAdjust="spacingAndGlyphs" stroke="#000" stroke-width="0.25" >Silver</text>
<text x="279.54" y="284.50" font-family="Liberation Serif" font-size="11" font-weight="400" fill="#000" textLength="29.93" lengthAdjust="spacingAndGlyphs" stroke="#000" stroke-width="0.25" >13.2 nm</text>
<text x="283.34" y="297.80" font-family="Liberation Serif" font-size="11" font-weight="400" fill="#000" textLength="22.31" lengthAdjust="spacingAndGlyphs" stroke="#000" stroke-width="0.25" >Oxide</text>
<text x="279.54" y="311.70" font-family="Liberation Serif" font-size="11" font-weight="400" fill="#000" textLength="29.93" lengthAdjust="spacingAndGlyphs" stroke="#000" stroke-width="0.25" >24.4 nm</text>
<text x="284.36" y="324.60" font-family="Liberation Serif" font-size="11" font-weight="400" fill="#000" textLength="20.29" lengthAdjust="spacingAndGlyphs" stroke="#000" stroke-width="0.25" >Glass</text>
<text x="275.99" y="338.50" font-family="Liberation Serif" font-size="11" font-weight="400" fill="#000" textLength="37.03" lengthAdjust="spacingAndGlyphs" stroke="#000" stroke-width="0.25" >4.000 mm</text>
<text x="279.54" y="350.20" font-family="Liberation Serif" font-size="11" font-weight="400" fill="#000" textLength="29.92" lengthAdjust="spacingAndGlyphs" stroke="#000" stroke-width="0.25" >Vacuum</text>
<rect x="401" y="92" width="384" height="286" fill="#000" />
<text x="409.00" y="107.00" font-family="Liberation Serif" font-size="11" font-weight="700" fill="#ffff50" textLength="58.10" lengthAdjust="spacingAndGlyphs" stroke="#ffff50" stroke-width="0.12" >Technical data</text>
<text x="409.00" y="120.00" font-family="Liberation Serif" font-size="11" font-weight="700" fill="#ffff50" textLength="68.31" lengthAdjust="spacingAndGlyphs" stroke="#ffff50" stroke-width="0.12" >Integral quantity</text>
<text x="631.10" y="120.00" font-family="Liberation Serif" font-size="11" font-weight="700" fill="#ffff50" textLength="55.20" lengthAdjust="spacingAndGlyphs" stroke="#ffff50" stroke-width="0.12" >Current value</text>
<text x="708.50" y="120.00" font-family="Liberation Serif" font-size="11" font-weight="700" fill="#ffff50" textLength="49.50" lengthAdjust="spacingAndGlyphs" stroke="#ffff50" stroke-width="0.12" >Target value</text>
<rect x="407" y="123" width="372" height="13" fill="#808080" />
<text x="409.20" y="133.20" font-family="Liberation Serif" font-size="11" font-weight="400" fill="#ffff50" textLength="99.90" lengthAdjust="spacingAndGlyphs" stroke="#ffff50" stroke-width="0.12" >Emissivity top surface [%]</text>
<text x="641.08" y="133.20" font-family="Liberation Serif" font-size="11" font-weight="400" fill="#ffff50" textLength="21.04" lengthAdjust="spacingAndGlyphs" stroke="#ffff50" stroke-width="0.12" >83.41</text>
<text x="409.20" y="146.20" font-family="Liberation Serif" font-size="11" font-weight="400" fill="#ffff50" textLength="135.40" lengthAdjust="spacingAndGlyphs" stroke="#ffff50" stroke-width="0.12" >Emissivity (normal) (R, Simulation)</text>
<text x="638.74" y="146.20" font-family="Liberation Serif" font-size="11" font-weight="400" fill="#ffff50" textLength="25.71" lengthAdjust="spacingAndGlyphs" stroke="#ffff50" stroke-width="0.12" >0.8870</text>
<rect x="407" y="149" width="372" height="13" fill="#808080" />
<text x="409.20" y="159.20" font-family="Liberation Serif" font-size="11" font-weight="400" fill="#ffff50" textLength="56.90" lengthAdjust="spacingAndGlyphs" stroke="#ffff50" stroke-width="0.12" >Ra (Reflection)</text>
<text x="646.93" y="159.20" font-family="Liberation Serif" font-size="11" font-weight="400" fill="#ffff50" textLength="9.35" lengthAdjust="spacingAndGlyphs" stroke="#ffff50" stroke-width="0.12" >87</text>
<text x="409.20" y="172.20" font-family="Liberation Serif" font-size="11" font-weight="400" fill="#ffff50" textLength="68.80" lengthAdjust="spacingAndGlyphs" stroke="#ffff50" stroke-width="0.12" >Ra (Transmission)</text>
<text x="646.93" y="172.20" font-family="Liberation Serif" font-size="11" font-weight="400" fill="#ffff50" textLength="9.35" lengthAdjust="spacingAndGlyphs" stroke="#ffff50" stroke-width="0.12" >96</text>
<rect x="407" y="175" width="372" height="13" fill="#808080" />
<text x="409.20" y="185.20" font-family="Liberation Serif" font-size="11" font-weight="400" fill="#ffff50" textLength="113.60" lengthAdjust="spacingAndGlyphs" stroke="#ffff50" stroke-width="0.12" >Front window absorption [%]</text>
<text x="646.93" y="185.20" font-family="Liberation Serif" font-size="11" font-weight="400" fill="#ffff50" textLength="9.35" lengthAdjust="spacingAndGlyphs" stroke="#ffff50" stroke-width="0.12" >10</text>
<text x="409.20" y="198.20" font-family="Liberation Serif" font-size="11" font-weight="400" fill="#ffff50" textLength="82.20" lengthAdjust="spacingAndGlyphs" stroke="#ffff50" stroke-width="0.12" >U (EN 673) [W/m2K]</text>
<text x="645.76" y="198.20" font-family="Liberation Serif" font-size="11" font-weight="400" fill="#ffff50" textLength="11.69" lengthAdjust="spacingAndGlyphs" stroke="#ffff50" stroke-width="0.12" >1.1</text>
<text x="722.16" y="198.20" font-family="Liberation Serif" font-size="11" font-weight="400" fill="#ffff50" textLength="11.69" lengthAdjust="spacingAndGlyphs" stroke="#ffff50" stroke-width="0.12" >1.0</text>
<rect x="407" y="201" width="372" height="13" fill="#808080" />
<text x="409.20" y="211.20" font-family="Liberation Serif" font-size="11" font-weight="400" fill="#ffff50" textLength="42.20" lengthAdjust="spacingAndGlyphs" stroke="#ffff50" stroke-width="0.12" >g (EN 410)</text>
<text x="643.42" y="211.20" font-family="Liberation Serif" font-size="11" font-weight="400" fill="#ffff50" textLength="16.36" lengthAdjust="spacingAndGlyphs" stroke="#ffff50" stroke-width="0.12" >0.61</text>
<text x="409.20" y="224.20" font-family="Liberation Serif" font-size="11" font-weight="400" fill="#ffff50" textLength="56.90" lengthAdjust="spacingAndGlyphs" stroke="#ffff50" stroke-width="0.12" >g (DIN 67507)</text>
<text x="643.42" y="224.20" font-family="Liberation Serif" font-size="11" font-weight="400" fill="#ffff50" textLength="16.36" lengthAdjust="spacingAndGlyphs" stroke="#ffff50" stroke-width="0.12" >0.58</text>
<rect x="407" y="227" width="372" height="13" fill="#808080" />
<text x="409.20" y="237.20" font-family="Liberation Serif" font-size="11" font-weight="400" fill="#ffff50" textLength="69.40" lengthAdjust="spacingAndGlyphs" stroke="#ffff50" stroke-width="0.12" >L* (Transmission)</text>
<text x="641.08" y="237.20" font-family="Liberation Serif" font-size="11" font-weight="400" fill="#ffff50" textLength="21.04" lengthAdjust="spacingAndGlyphs" stroke="#ffff50" stroke-width="0.12" >89.84</text>
<text x="409.20" y="250.20" font-family="Liberation Serif" font-size="11" font-weight="400" fill="#ffff50" textLength="67.50" lengthAdjust="spacingAndGlyphs" stroke="#ffff50" stroke-width="0.12" >a* (Transmission)</text>
<text x="641.86" y="250.20" font-family="Liberation Serif" font-size="11" font-weight="400" fill="#ffff50" textLength="19.48" lengthAdjust="spacingAndGlyphs" stroke="#ffff50" stroke-width="0.12" >-4.02</text>
<rect x="407" y="253" width="372" height="13" fill="#808080" />
<text x="409.20" y="263.20" font-family="Liberation Serif" font-size="11" font-weight="400" fill="#ffff50" textLength="68.50" lengthAdjust="spacingAndGlyphs" stroke="#ffff50" stroke-width="0.12" >b* (Transmission)</text>
<text x="641.08" y="263.20" font-family="Liberation Serif" font-size="11" font-weight="400" fill="#ffff50" textLength="21.04" lengthAdjust="spacingAndGlyphs" stroke="#ffff50" stroke-width="0.12" >12.52</text>
<text x="409.20" y="276.20" font-family="Liberation Serif" font-size="11" font-weight="400" fill="#ffff50" textLength="54.20" lengthAdjust="spacingAndGlyphs" stroke="#ffff50" stroke-width="0.12" >L* (Reflexion)</text>
<text x="641.08" y="276.20" font-family="Liberation Serif" font-size="11" font-weight="400" fill="#ffff50" textLength="21.04" lengthAdjust="spacingAndGlyphs" stroke="#ffff50" stroke-width="0.12" >42.91</text>
<rect x="407" y="279" width="372" height="13" fill="#808080" />
<text x="409.20" y="289.20" font-family="Liberation Serif" font-size="11" font-weight="400" fill="#ffff50" textLength="52.30" lengthAdjust="spacingAndGlyphs" stroke="#ffff50" stroke-width="0.12" >a* (Reflexion)</text>
<text x="643.42" y="289.20" font-family="Liberation Serif" font-size="11" font-weight="400" fill="#ffff50" textLength="16.36" lengthAdjust="spacingAndGlyphs" stroke="#ffff50" stroke-width="0.12" >0.08</text>
<text x="719.82" y="289.20" font-family="Liberation Serif" font-size="11" font-weight="400" fill="#ffff50" textLength="16.36" lengthAdjust="spacingAndGlyphs" stroke="#ffff50" stroke-width="0.12" >0.00</text>
<text x="409.20" y="302.20" font-family="Liberation Serif" font-size="11" font-weight="400" fill="#ffff50" textLength="53.20" lengthAdjust="spacingAndGlyphs" stroke="#ffff50" stroke-width="0.12" >b* (Reflexion)</text>
<text x="641.86" y="302.20" font-family="Liberation Serif" font-size="11" font-weight="400" fill="#ffff50" textLength="19.48" lengthAdjust="spacingAndGlyphs" stroke="#ffff50" stroke-width="0.12" >-9.98</text>
<text x="715.92" y="302.20" font-family="Liberation Serif" font-size="11" font-weight="400" fill="#ffff50" textLength="24.15" lengthAdjust="spacingAndGlyphs" stroke="#ffff50" stroke-width="0.12" >-10.00</text>
<rect x="407" y="305" width="372" height="13" fill="#808080" />
<text x="409.20" y="315.20" font-family="Liberation Serif" font-size="11" font-weight="400" fill="#ffff50" textLength="146.90" lengthAdjust="spacingAndGlyphs" stroke="#ffff50" stroke-width="0.12" >Light reflectance (D65) (Backside) [%]</text>
<text x="646.93" y="315.20" font-family="Liberation Serif" font-size="11" font-weight="400" fill="#ffff50" textLength="9.35" lengthAdjust="spacingAndGlyphs" stroke="#ffff50" stroke-width="0.12" >13</text>
<text x="409.20" y="328.20" font-family="Liberation Serif" font-size="11" font-weight="400" fill="#ffff50" textLength="78.40" lengthAdjust="spacingAndGlyphs" stroke="#ffff50" stroke-width="0.12" >Light reflectance [%]</text>
<text x="646.93" y="328.20" font-family="Liberation Serif" font-size="11" font-weight="400" fill="#ffff50" textLength="9.35" lengthAdjust="spacingAndGlyphs" stroke="#ffff50" stroke-width="0.12" >13</text>
<rect x="407" y="331" width="372" height="13" fill="#808080" />
<text x="409.20" y="341.20" font-family="Liberation Serif" font-size="11" font-weight="400" fill="#ffff50" textLength="76.50" lengthAdjust="spacingAndGlyphs" stroke="#ffff50" stroke-width="0.12" >Solar reflectance [%]</text>
<text x="646.93" y="341.20" font-family="Liberation Serif" font-size="11" font-weight="400" fill="#ffff50" textLength="9.35" lengthAdjust="spacingAndGlyphs" stroke="#ffff50" stroke-width="0.12" >31</text>
<text x="409.20" y="354.20" font-family="Liberation Serif" font-size="11" font-weight="400" fill="#ffff50" textLength="87.50" lengthAdjust="spacingAndGlyphs" stroke="#ffff50" stroke-width="0.12" >Solar transmittance [%]</text>
<text x="646.93" y="354.20" font-family="Liberation Serif" font-size="11" font-weight="400" fill="#ffff50" textLength="9.35" lengthAdjust="spacingAndGlyphs" stroke="#ffff50" stroke-width="0.12" >48</text>
<rect x="407" y="357" width="372" height="13" fill="#808080" />
<text x="409.20" y="367.20" font-family="Liberation Serif" font-size="11" font-weight="400" fill="#ffff50" textLength="89.20" lengthAdjust="spacingAndGlyphs" stroke="#ffff50" stroke-width="0.12" >Light transmittance [%]</text>
<text x="646.93" y="367.20" font-family="Liberation Serif" font-size="11" font-weight="400" fill="#ffff50" textLength="9.35" lengthAdjust="spacingAndGlyphs" stroke="#ffff50" stroke-width="0.12" >76</text>
<text x="723.33" y="367.20" font-family="Liberation Serif" font-size="11" font-weight="400" fill="#ffff50" textLength="9.35" lengthAdjust="spacingAndGlyphs" stroke="#ffff50" stroke-width="0.12" >90</text>
<text x="30.50" y="453.00" font-family="Liberation Serif" font-size="11" font-weight="700" fill="#000" textLength="69.00" lengthAdjust="spacingAndGlyphs" stroke="#000" stroke-width="0.12" >Optical constants</text>
<text x="58.20" y="465.60" font-family="Liberation Serif" font-size="11" font-weight="700" fill="#000" textLength="38.60" lengthAdjust="spacingAndGlyphs" stroke="#000" stroke-width="0.12" >Materials</text>
<text x="30.50" y="478.70" font-family="Liberation Serif" font-size="11" font-weight="400" fill="#000" textLength="29.92" lengthAdjust="spacingAndGlyphs" stroke="#000" stroke-width="0.25" >Vacuum</text>
<text x="30.50" y="491.70" font-family="Liberation Serif" font-size="11" font-weight="400" fill="#000" textLength="21.81" lengthAdjust="spacingAndGlyphs" stroke="#000" stroke-width="0.25" >Silver</text>
<text x="30.50" y="504.70" font-family="Liberation Serif" font-size="11" font-weight="400" fill="#000" textLength="22.31" lengthAdjust="spacingAndGlyphs" stroke="#000" stroke-width="0.25" >Oxide</text>
<text x="30.50" y="517.70" font-family="Liberation Serif" font-size="11" font-weight="400" fill="#000" textLength="23.16" lengthAdjust="spacingAndGlyphs" stroke="#000" stroke-width="0.25" >Argon</text>
<text x="30.50" y="530.70" font-family="Liberation Serif" font-size="11" font-weight="400" fill="#000" textLength="20.29" lengthAdjust="spacingAndGlyphs" stroke="#000" stroke-width="0.25" >Glass</text>
<rect x="141" y="440" width="92" height="91" fill="#00ffff" />
<text x="143.30" y="455.00" font-family="Liberation Serif" font-size="11" font-weight="700" fill="#000" textLength="62.70" lengthAdjust="spacingAndGlyphs" stroke="#000" stroke-width="0.12" >The layer stacks</text>
<text x="177.24" y="468.00" font-family="Liberation Serif" font-size="11" font-weight="700" fill="#000" textLength="23.92" lengthAdjust="spacingAndGlyphs" stroke="#000" stroke-width="0.12" >Name</text>
<text x="174.35" y="481.20" font-family="Liberation Serif" font-size="11" font-weight="400" fill="#000" textLength="30.30" lengthAdjust="spacingAndGlyphs" stroke="#000" stroke-width="0.25" >Coating</text>
<text x="167.84" y="494.20" font-family="Liberation Serif" font-size="11" font-weight="400" fill="#000" textLength="43.32" lengthAdjust="spacingAndGlyphs" stroke="#000" stroke-width="0.25" >Mono pane</text>
<text x="169.97" y="507.20" font-family="Liberation Serif" font-size="11" font-weight="400" fill="#000" textLength="39.06" lengthAdjust="spacingAndGlyphs" stroke="#000" stroke-width="0.25" >Dual pane</text>
<text x="167.75" y="520.20" font-family="Liberation Serif" font-size="11" font-weight="400" fill="#000" textLength="43.50" lengthAdjust="spacingAndGlyphs" stroke="#000" stroke-width="0.25" >Triple pane</text>
<rect x="249" y="441" width="146" height="143" fill="#80ff00" />
<text x="252.40" y="455.70" font-family="Liberation Serif" font-size="11" font-weight="700" fill="#000" textLength="30.64" lengthAdjust="spacingAndGlyphs" stroke="#000" stroke-width="0.12" >Spectra</text>
<text x="276.52" y="468.40" font-family="Liberation Serif" font-size="11" font-weight="700" fill="#000" textLength="38.95" lengthAdjust="spacingAndGlyphs" stroke="#000" stroke-width="0.12" >Spectrum</text>
<text x="354.50" y="468.40" font-family="Liberation Serif" font-size="11" font-weight="700" fill="#000" textLength="28.60" lengthAdjust="spacingAndGlyphs" stroke="#000" stroke-width="0.12" >Weight</text>
<rect x="251" y="472" width="141" height="13" fill="#c0ff90" />
<text x="252.40" y="482.00" font-family="Liberation Serif" font-size="11" font-weight="400" fill="#000" textLength="6.09" lengthAdjust="spacingAndGlyphs" stroke="#000" stroke-width="0.25" >R</text>
<text x="360.47" y="482.00" font-family="Liberation Serif" font-size="11" font-weight="400" fill="#000" textLength="21.53" lengthAdjust="spacingAndGlyphs" stroke="#000" stroke-width="0.25" >1.000</text>
<text x="252.40" y="495.00" font-family="Liberation Serif" font-size="11" font-weight="400" fill="#000" textLength="5.58" lengthAdjust="spacingAndGlyphs" stroke="#000" stroke-width="0.25" >T</text>
<text x="360.47" y="495.00" font-family="Liberation Serif" font-size="11" font-weight="400" fill="#000" textLength="21.53" lengthAdjust="spacingAndGlyphs" stroke="#000" stroke-width="0.25" >1.000</text>
<rect x="251" y="498" width="141" height="13" fill="#c0ff90" />
<text x="252.40" y="508.00" font-family="Liberation Serif" font-size="11" font-weight="400" fill="#000" textLength="6.59" lengthAdjust="spacingAndGlyphs" stroke="#000" stroke-width="0.25" >A</text>
<text x="360.47" y="508.00" font-family="Liberation Serif" font-size="11" font-weight="400" fill="#000" textLength="21.53" lengthAdjust="spacingAndGlyphs" stroke="#000" stroke-width="0.25" >1.000</text>
<text x="252.40" y="521.00" font-family="Liberation Serif" font-size="11" font-weight="400" fill="#000" textLength="31.69" lengthAdjust="spacingAndGlyphs" stroke="#000" stroke-width="0.25" >R (back)</text>
<text x="360.47" y="521.00" font-family="Liberation Serif" font-size="11" font-weight="400" fill="#000" textLength="21.53" lengthAdjust="spacingAndGlyphs" stroke="#000" stroke-width="0.25" >1.000</text>
<rect x="251" y="524" width="141" height="13" fill="#c0ff90" />
<text x="252.40" y="534.00" font-family="Liberation Serif" font-size="11" font-weight="400" fill="#000" textLength="22.62" lengthAdjust="spacingAndGlyphs" stroke="#000" stroke-width="0.25" >R, Vis</text>
<text x="360.47" y="534.00" font-family="Liberation Serif" font-size="11" font-weight="400" fill="#000" textLength="21.53" lengthAdjust="spacingAndGlyphs" stroke="#000" stroke-width="0.25" >1.000</text>
<text x="252.40" y="547.00" font-family="Liberation Serif" font-size="11" font-weight="400" fill="#000" textLength="21.43" lengthAdjust="spacingAndGlyphs" stroke="#000" stroke-width="0.25" >T, Vis</text>
<text x="360.47" y="547.00" font-family="Liberation Serif" font-size="11" font-weight="400" fill="#000" textLength="21.53" lengthAdjust="spacingAndGlyphs" stroke="#000" stroke-width="0.25" >1.000</text>
<rect x="251" y="550" width="141" height="13" fill="#c0ff90" />
<text x="252.40" y="560.00" font-family="Liberation Serif" font-size="11" font-weight="400" fill="#000" textLength="23.13" lengthAdjust="spacingAndGlyphs" stroke="#000" stroke-width="0.25" >A, Vis</text>
<text x="360.47" y="560.00" font-family="Liberation Serif" font-size="11" font-weight="400" fill="#000" textLength="21.53" lengthAdjust="spacingAndGlyphs" stroke="#000" stroke-width="0.25" >1.000</text>
<text x="252.40" y="573.00" font-family="Liberation Serif" font-size="11" font-weight="400" fill="#000" textLength="48.22" lengthAdjust="spacingAndGlyphs" stroke="#000" stroke-width="0.25" >R (back), Vis</text>
<text x="360.47" y="573.00" font-family="Liberation Serif" font-size="11" font-weight="400" fill="#000" textLength="21.53" lengthAdjust="spacingAndGlyphs" stroke="#000" stroke-width="0.25" >1.000</text>
<rect x="451.5" y="437.5" width="232" height="181" fill="none" stroke="#000" stroke-width="1"/>
<line x1="448" y1="618.5" x2="451.5" y2="618.5" stroke="#000" stroke-width="1"/>
<text x="427.10" y="622.10" font-family="Liberation Serif" font-size="12" font-weight="400" fill="#000" textLength="14.40" lengthAdjust="spacingAndGlyphs" stroke="#000" stroke-width="0.1" >0.0</text>
<line x1="448" y1="582.5" x2="451.5" y2="582.5" stroke="#000" stroke-width="1"/>
<text x="427.10" y="586.10" font-family="Liberation Serif" font-size="12" font-weight="400" fill="#000" textLength="14.40" lengthAdjust="spacingAndGlyphs" stroke="#000" stroke-width="0.1" >0.2</text>
<line x1="448" y1="546.5" x2="451.5" y2="546.5" stroke="#000" stroke-width="1"/>
<text x="427.10" y="550.10" font-family="Liberation Serif" font-size="12" font-weight="400" fill="#000" textLength="14.40" lengthAdjust="spacingAndGlyphs" stroke="#000" stroke-width="0.1" >0.4</text>
<line x1="448" y1="509.5" x2="451.5" y2="509.5" stroke="#000" stroke-width="1"/>
<text x="427.10" y="513.10" font-family="Liberation Serif" font-size="12" font-weight="400" fill="#000" textLength="14.40" lengthAdjust="spacingAndGlyphs" stroke="#000" stroke-width="0.1" >0.6</text>
<line x1="448" y1="473.5" x2="451.5" y2="473.5" stroke="#000" stroke-width="1"/>
<text x="427.10" y="477.10" font-family="Liberation Serif" font-size="12" font-weight="400" fill="#000" textLength="14.40" lengthAdjust="spacingAndGlyphs" stroke="#000" stroke-width="0.1" >0.8</text>
<line x1="448" y1="437.5" x2="451.5" y2="437.5" stroke="#000" stroke-width="1"/>
<text x="427.10" y="441.10" font-family="Liberation Serif" font-size="12" font-weight="400" fill="#000" textLength="14.40" lengthAdjust="spacingAndGlyphs" stroke="#000" stroke-width="0.1" >1.0</text>
<line x1="472.5" y1="618.5" x2="472.5" y2="622" stroke="#000" stroke-width="1"/>
<text x="463.86" y="634.50" font-family="Liberation Serif" font-size="12" font-weight="400" fill="#000" textLength="17.28" lengthAdjust="spacingAndGlyphs" stroke="#000" stroke-width="0.1" >500</text>
<line x1="525.5" y1="618.5" x2="525.5" y2="622" stroke="#000" stroke-width="1"/>
<text x="513.98" y="634.50" font-family="Liberation Serif" font-size="12" font-weight="400" fill="#000" textLength="23.04" lengthAdjust="spacingAndGlyphs" stroke="#000" stroke-width="0.1" >1000</text>
<line x1="577.5" y1="618.5" x2="577.5" y2="622" stroke="#000" stroke-width="1"/>
<text x="565.98" y="634.50" font-family="Liberation Serif" font-size="12" font-weight="400" fill="#000" textLength="23.04" lengthAdjust="spacingAndGlyphs" stroke="#000" stroke-width="0.1" >1500</text>
<line x1="630.5" y1="618.5" x2="630.5" y2="622" stroke="#000" stroke-width="1"/>
<text x="618.98" y="634.50" font-family="Liberation Serif" font-size="12" font-weight="400" fill="#000" textLength="23.04" lengthAdjust="spacingAndGlyphs" stroke="#000" stroke-width="0.1" >2000</text>
<line x1="683.5" y1="618.5" x2="683.5" y2="622" stroke="#000" stroke-width="1"/>
<text x="671.98" y="634.50" font-family="Liberation Serif" font-size="12" font-weight="400" fill="#000" textLength="23.04" lengthAdjust="spacingAndGlyphs" stroke="#000" stroke-width="0.1" >2500</text>
<text x="573.70" y="650.70" font-family="Liberation Serif" font-size="12" font-weight="400" fill="#000" textLength="81.00" lengthAdjust="spacingAndGlyphs" stroke="#000" stroke-width="0.1" >Wavelength [nm]</text>
<text x="-12.9" y="0" font-family="Liberation Serif" font-size="13.5" fill="#000" stroke="#000" stroke-width="0.1" textLength="25.8" lengthAdjust="spacingAndGlyphs" transform="translate(414,488.8) rotate(-90)">Data</text>
<polyline points="451.6,618.50 462.1,535.24 472.6,484.92 483.2,475.51 493.7,490.35 494.7,492.74 495.8,495.42 496.8,498.34 497.9,501.43 499.0,504.62 500.0,507.85 501.1,511.05 502.1,514.16 503.2,517.12 504.2,519.86 505.3,522.42 506.3,524.91 507.4,527.32 508.4,529.66 509.5,531.94 510.5,534.15 511.6,536.31 512.6,538.41 513.7,540.47 514.7,542.48 515.8,544.44 516.8,546.34 517.9,548.18 518.9,549.97 520.0,551.70 521.1,553.38 522.1,555.02 523.2,556.61 524.2,558.16 525.3,559.67 526.3,561.14 527.4,562.54 528.4,563.89 529.5,565.20 530.5,566.46 531.6,567.69 532.6,568.89 533.7,570.06 534.7,571.21 535.8,572.35 536.8,573.47 537.9,574.57 538.9,575.65 540.0,576.70 541.0,577.72 542.1,578.71 543.1,579.67 544.2,580.58 545.3,581.46 546.3,582.30 547.4,583.09 548.4,583.83 549.5,584.52 550.5,585.18 551.6,585.81 552.6,586.41 553.7,586.98 554.7,587.54 555.8,588.09 556.8,588.63 557.9,589.17 558.9,589.68 560.0,590.17 561.0,590.64 562.1,591.09 563.1,591.53 564.2,591.95 565.2,592.37 566.3,592.77 567.4,593.16 568.4,593.54 569.5,593.90 570.5,594.25 571.6,594.59 572.6,594.91 573.7,595.23 574.7,595.53 575.8,595.83 576.8,596.13 577.9,596.42 578.9,596.70 580.0,596.97 581.0,597.24 582.1,597.49 583.1,597.74 584.2,597.99 585.2,598.23 586.3,598.47 587.3,598.71 588.4,598.95 589.4,599.19 590.5,599.43 591.6,599.67 592.6,599.91 593.7,600.14 594.7,600.37 595.8,600.60 596.8,600.84 597.9,601.07 598.9,601.30 609.4,603.66 620.0,605.47 630.5,606.92 641.0,608.18 651.5,609.45 662.1,610.17 672.6,610.90 683.1,611.26" fill="none" stroke="#e81800" stroke-width="1.0" stroke-linejoin="round" shape-rendering="crispEdges"/>
<polyline points="451.6,447.09 462.1,550.99 465.1,566.55 467.9,579.04 470.8,590.81 472.6,597.50 475.8,599.68 479.3,600.22 483.2,600.22 487.4,598.95 490.6,597.32 493.7,593.16 504.2,584.11 505.3,583.35 506.3,582.63 507.4,581.92 508.4,581.25 509.5,580.60 510.5,579.98 511.6,579.39 512.6,578.82 513.7,578.29 514.7,577.77 515.8,577.29 516.8,576.83 517.9,576.40 518.9,576.00 520.0,575.63 521.1,575.28 522.1,574.96 523.2,574.66 524.2,574.39 525.3,574.15 526.3,573.94 527.4,573.77 528.4,573.62 529.5,573.49 530.5,573.40 531.6,573.33 532.6,573.28 533.7,573.25 534.7,573.24 535.8,573.25 536.8,573.28 537.9,573.33 538.9,573.41 540.0,573.50 541.0,573.62 542.1,573.76 543.1,573.92 544.2,574.10 545.3,574.30 546.3,574.52 547.4,574.76 548.4,575.02 549.5,575.31 550.5,575.62 551.6,575.94 552.6,576.29 553.7,576.64 554.7,577.01 555.8,577.39 556.8,577.77 557.9,578.18 558.9,578.60 560.0,579.04 561.0,579.49 562.1,579.96 563.1,580.43 564.2,580.90 565.2,581.37 566.3,581.84 567.4,582.30 568.4,582.76 569.5,583.23 570.5,583.70 571.6,584.17 572.6,584.64 573.7,585.11 574.7,585.56 575.8,586.00 576.8,586.42 577.9,586.83 578.9,587.22 580.0,587.60 581.0,587.99 582.1,588.36 583.1,588.71 584.2,589.05 585.2,589.36 586.3,589.64 587.3,589.88 588.4,590.08 589.4,590.24 590.5,590.35 591.6,590.42 592.6,590.45 593.7,590.47 594.7,590.47 595.8,590.45 596.8,590.44 597.9,590.44 598.9,590.45 609.4,590.45 620.0,589.54 630.5,589.00 641.0,588.45 651.5,582.84 662.1,582.84 672.6,582.84 683.1,577.05" fill="none" stroke="#30e800" stroke-width="1.0" stroke-linejoin="round" shape-rendering="crispEdges"/>
<g>
<polyline points="451.6,610.81 472.6,590.36 483.2,600.13 493.7,593.80 504.2,579.60 514.7,561.42 515.8,559.70 516.8,557.97 517.9,556.25 518.9,554.55 520.0,552.87 521.1,551.22 522.1,549.60 523.2,548.04 524.2,546.52 525.3,545.06 526.3,543.66 527.4,542.31 528.4,541.01 529.5,539.75 530.5,538.54 531.6,537.27 532.6,536.03 533.7,534.82 534.7,533.62 535.8,532.44 536.8,531.28 537.9,530.17 538.9,529.09 540.0,528.03 541.0,527.00 542.1,525.98 543.1,524.97 544.2,523.97 545.3,522.96 546.3,521.94 547.4,520.92 548.4,519.89 549.5,518.86 550.5,517.83 551.6,516.82 552.6,515.81 553.7,514.82 554.7,513.85 555.8,512.91 556.8,511.99 557.9,511.10 558.9,510.24 560.0,509.40 561.0,508.58 562.1,507.78 563.1,506.99 564.2,506.20 565.2,505.42 566.3,504.63 567.4,503.84 568.4,503.04 569.5,502.21 570.5,501.39 571.6,500.56 572.6,499.75 573.7,498.95 574.7,498.17 575.8,497.42 576.8,496.72 577.9,496.06 578.9,495.45 580.0,494.88 581.0,494.36 582.1,493.86 583.1,493.39 584.2,492.93 585.2,492.49 586.3,492.06 587.3,491.62 588.4,491.17 589.4,490.71 590.5,490.25 591.6,489.78 592.6,489.32 593.7,488.87 594.7,488.44 595.8,488.03 596.8,487.66 597.9,487.31 598.9,487.01 609.4,485.56 620.0,484.47 630.5,483.57 641.0,482.66 651.5,486.47 662.1,486.10 672.6,485.74 683.1,490.63" fill="none" stroke="#b8b8f0" stroke-width="1.0" stroke-linejoin="round" shape-rendering="crispEdges"/>
<polyline points="451.6,609.81 472.6,589.36 483.2,599.13 493.7,592.80 504.2,578.60 514.7,560.42 515.8,558.70 516.8,556.97 517.9,555.25 518.9,553.55 520.0,551.87 521.1,550.22 522.1,548.60 523.2,547.04 524.2,545.52 525.3,544.06 526.3,542.66 527.4,541.31 528.4,540.01 529.5,538.75 530.5,537.54 531.6,536.27 532.6,535.03 533.7,533.82 534.7,532.62 535.8,531.44 536.8,530.28 537.9,529.17 538.9,528.09 540.0,527.03 541.0,526.00 542.1,524.98 543.1,523.97 544.2,522.97 545.3,521.96 546.3,520.94 547.4,519.92 548.4,518.89 549.5,517.86 550.5,516.83 551.6,515.82 552.6,514.81 553.7,513.82 554.7,512.85 555.8,511.91 556.8,510.99 557.9,510.10 558.9,509.24 560.0,508.40 561.0,507.58 562.1,506.78 563.1,505.99 564.2,505.20 565.2,504.42 566.3,503.63 567.4,502.84 568.4,502.04 569.5,501.21 570.5,500.39 571.6,499.56 572.6,498.75 573.7,497.95 574.7,497.17 575.8,496.42 576.8,495.72 577.9,495.06 578.9,494.45 580.0,493.88 581.0,493.36 582.1,492.86 583.1,492.39 584.2,491.93 585.2,491.49 586.3,491.06 587.3,490.62 588.4,490.17 589.4,489.71 590.5,489.25 591.6,488.78 592.6,488.32 593.7,487.87 594.7,487.44 595.8,487.03 596.8,486.66 597.9,486.31 598.9,486.01 609.4,484.56 620.0,483.47 630.5,482.57 641.0,481.66 651.5,485.47 662.1,485.10 672.6,484.74 683.1,489.63" fill="none" stroke="#000090" stroke-width="1.0" stroke-linejoin="round" shape-rendering="crispEdges"/>
<polyline points="451.6,610.81 462.1,583.84 472.6,591.99 483.2,600.13 493.7,593.80 504.2,578.77 514.7,559.77 515.8,557.96 516.8,556.15 517.9,554.35 518.9,552.56 520.0,550.80 521.1,549.07 522.1,547.37 523.2,545.72 524.2,544.12 525.3,542.58 526.3,541.09 527.4,539.66 528.4,538.28 529.5,536.94 530.5,535.64 531.6,534.37 532.6,533.14 533.7,531.92 534.7,530.72 535.8,529.54 536.8,528.39 537.9,527.27 538.9,526.19 540.0,525.14 541.0,524.10 542.1,523.08 543.1,522.07 544.2,521.07 545.3,520.06 546.3,519.04 547.4,518.02 548.4,516.99 549.5,515.96 550.5,514.94 551.6,513.92 552.6,512.92 553.7,511.93 554.7,510.96 555.8,510.01 556.8,509.09 557.9,508.20 558.9,507.34 560.0,506.50 561.0,505.68 562.1,504.88 563.1,504.09 564.2,503.30 565.2,502.52 566.3,501.74 567.4,500.94 568.4,500.14 569.5,499.32 570.5,498.49 571.6,497.67 572.6,496.85 573.7,496.05 574.7,495.27 575.8,494.53 576.8,493.82 577.9,493.16 578.9,492.55 580.0,491.99 581.0,491.46 582.1,490.96 583.1,490.49 584.2,490.04 585.2,489.60 586.3,489.16 587.3,488.72 588.4,488.27 589.4,487.82 590.5,487.35 591.6,486.89 592.6,486.43 593.7,485.98 594.7,485.55 595.8,485.14 596.8,484.76 597.9,484.42 598.9,484.11 609.4,482.66 620.0,481.58 630.5,480.67 641.0,479.77 651.5,483.57 662.1,483.21 672.6,482.85 683.1,487.73" fill="none" stroke="#e0e0c8" stroke-width="1.0" stroke-linejoin="round" shape-rendering="crispEdges"/>
<polyline points="451.6,609.81 462.1,582.84 472.6,590.99 483.2,599.13 493.7,592.80 504.2,577.77 514.7,558.77 515.8,556.96 516.8,555.15 517.9,553.35 518.9,551.56 520.0,549.80 521.1,548.07 522.1,546.37 523.2,544.72 524.2,543.12 525.3,541.58 526.3,540.09 527.4,538.66 528.4,537.28 529.5,535.94 530.5,534.64 531.6,533.37 532.6,532.14 533.7,530.92 534.7,529.72 535.8,528.54 536.8,527.39 537.9,526.27 538.9,525.19 540.0,524.14 541.0,523.10 542.1,522.08 543.1,521.07 544.2,520.07 545.3,519.06 546.3,518.04 547.4,517.02 548.4,515.99 549.5,514.96 550.5,513.94 551.6,512.92 552.6,511.92 553.7,510.93 554.7,509.96 555.8,509.01 556.8,508.09 557.9,507.20 558.9,506.34 560.0,505.50 561.0,504.68 562.1,503.88 563.1,503.09 564.2,502.30 565.2,501.52 566.3,500.74 567.4,499.94 568.4,499.14 569.5,498.32 570.5,497.49 571.6,496.67 572.6,495.85 573.7,495.05 574.7,494.27 575.8,493.53 576.8,492.82 577.9,492.16 578.9,491.55 580.0,490.99 581.0,490.46 582.1,489.96 583.1,489.49 584.2,489.04 585.2,488.60 586.3,488.16 587.3,487.72 588.4,487.27 589.4,486.82 590.5,486.35 591.6,485.89 592.6,485.43 593.7,484.98 594.7,484.55 595.8,484.14 596.8,483.76 597.9,483.42 598.9,483.11 609.4,481.66 620.0,480.58 630.5,479.67 641.0,478.77 651.5,482.57 662.1,482.21 672.6,481.85 683.1,486.73" fill="none" stroke="#000000" stroke-width="1.0" stroke-linejoin="round" shape-rendering="crispEdges"/>
</g>
<line x1="697" y1="420.5" x2="721" y2="420.5" stroke="#000" stroke-width="1.3"/>
<line x1="697" y1="430.5" x2="721" y2="430.5" stroke="#f03010" stroke-width="1.3"/>
<line x1="697" y1="441" x2="721" y2="441" stroke="#30e020" stroke-width="2"/>
<line x1="697" y1="451.5" x2="721" y2="451.5" stroke="#1818a0" stroke-width="1.3"/>
<svg x="0" y="0" width="833" height="688" overflow="hidden">
<text x="756.00" y="423.80" font-family="Liberation Serif" font-size="10" font-weight="400" fill="#000" textLength="54.71" lengthAdjust="spacingAndGlyphs" stroke="#000" stroke-width="0.25" >R (simulated)</text>
<text x="756.00" y="434.00" font-family="Liberation Serif" font-size="10" font-weight="400" fill="#000" textLength="53.97" lengthAdjust="spacingAndGlyphs" stroke="#000" stroke-width="0.25" >T (simulated)</text>
<text x="756.00" y="444.40" font-family="Liberation Serif" font-size="10" font-weight="400" fill="#000" textLength="57.76" lengthAdjust="spacingAndGlyphs" stroke="#000" stroke-width="0.25" >A  (simulated)</text>
<text x="756.00" y="454.60" font-family="Liberation Serif" font-size="10" font-weight="400" fill="#000" textLength="82.75" lengthAdjust="spacingAndGlyphs" stroke="#000" stroke-width="0.25" >R (back) (simulated)</text>
</svg>
</svg></body></html>
